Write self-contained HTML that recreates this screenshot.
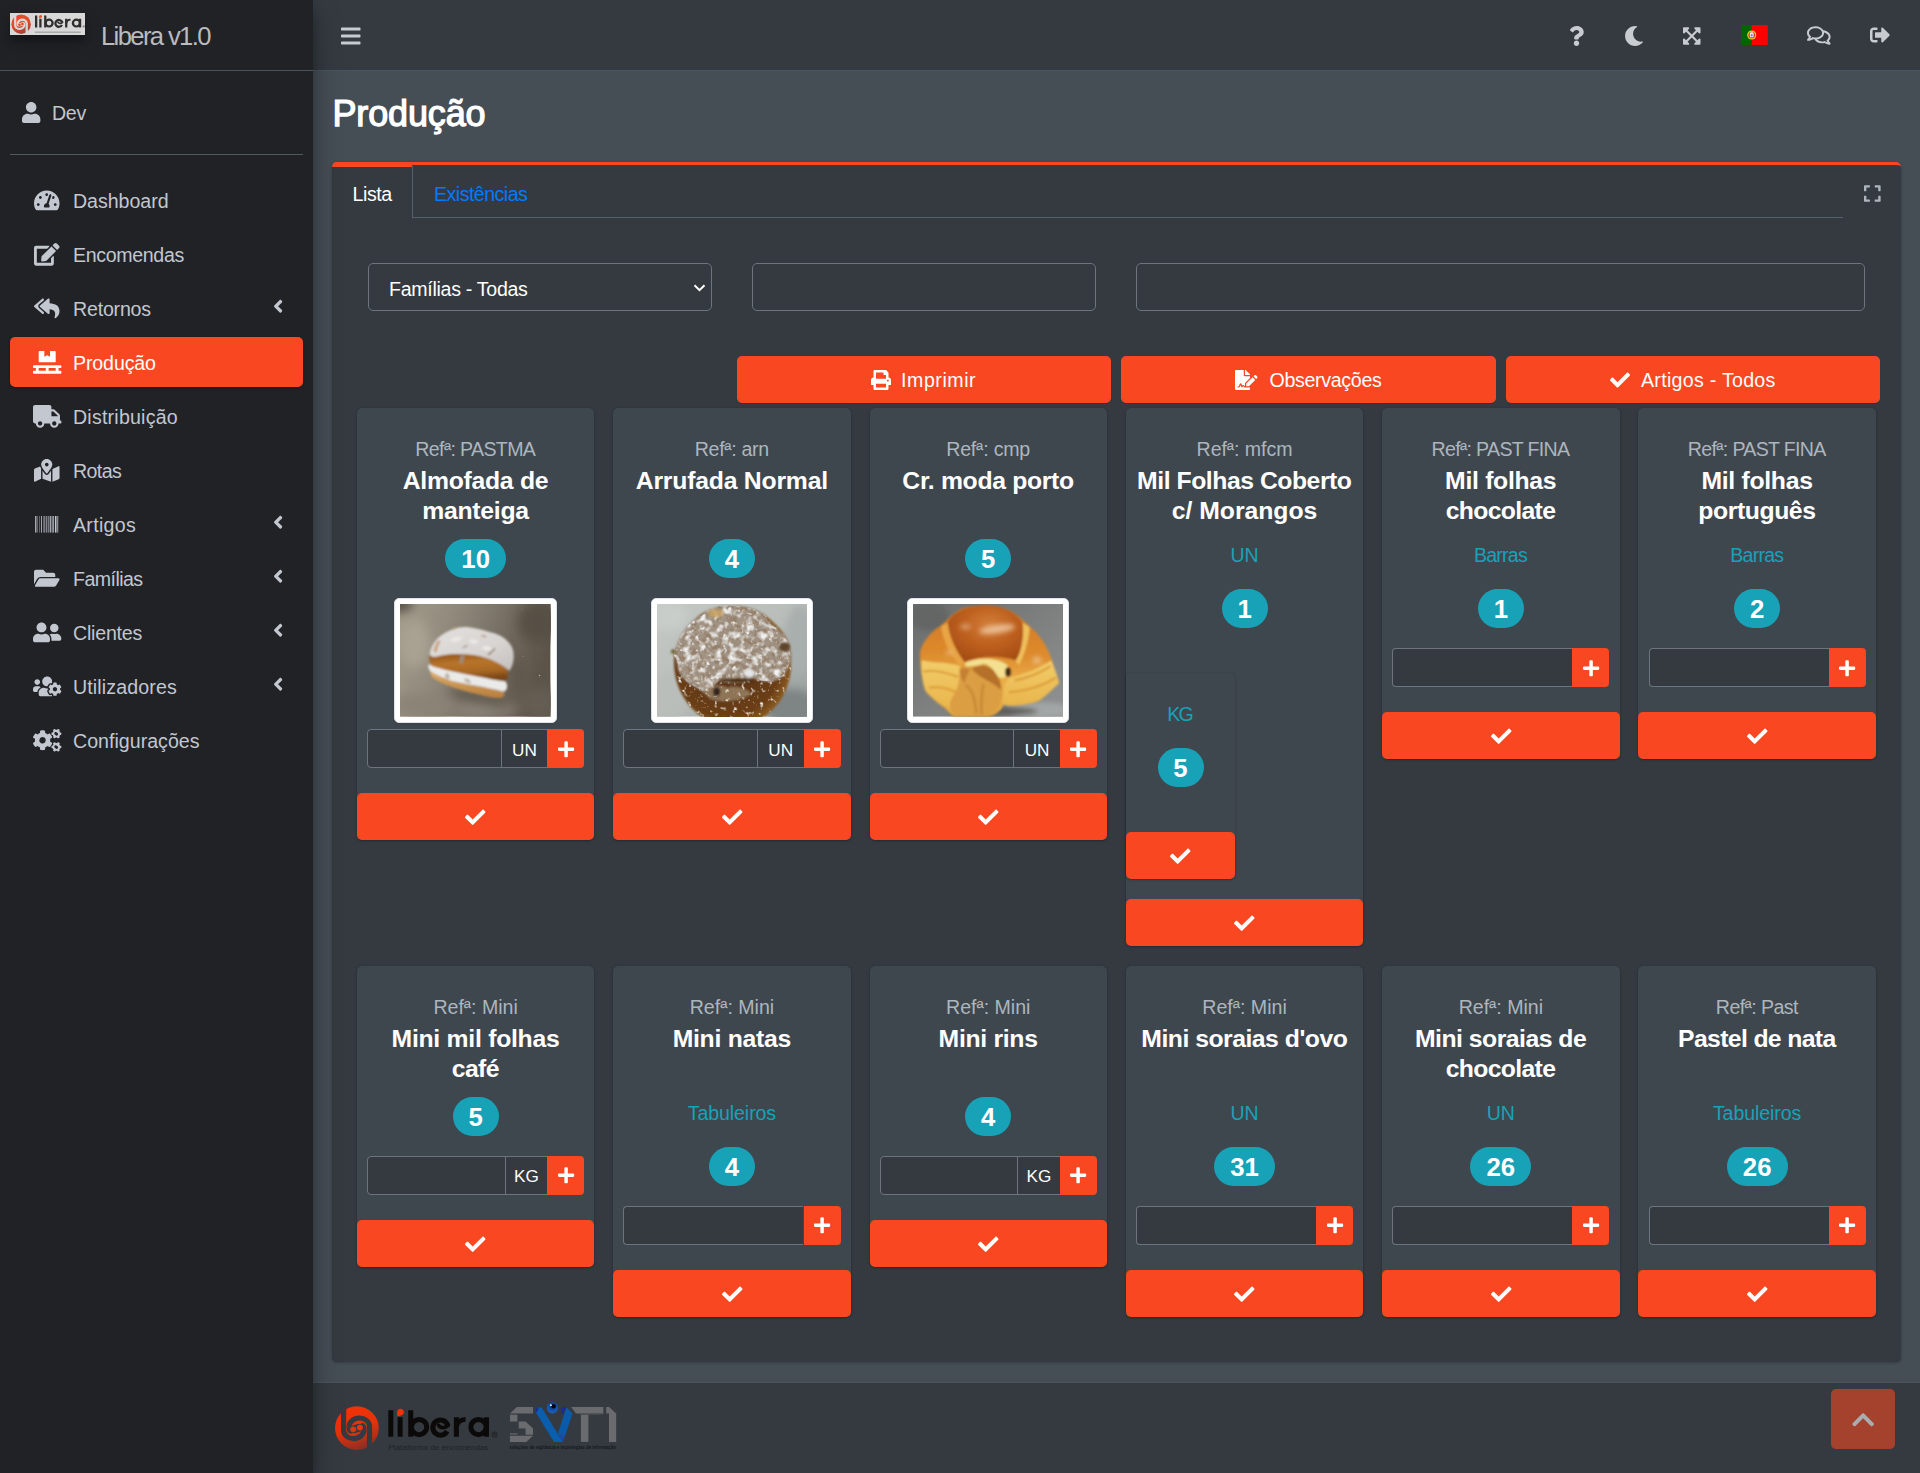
<!DOCTYPE html>
<html lang="pt">
<head>
<meta charset="utf-8">
<title>Libera v1.0 - Produção</title>
<style>
*{box-sizing:border-box}
html,body{margin:0;padding:0}
body{width:1920px;height:1473px;overflow:hidden;position:relative;background:#454d55;color:#fff;font-family:"Liberation Sans",sans-serif;font-size:19.4px}
.b{position:absolute;display:block}
.t{position:absolute;display:block;white-space:nowrap;margin:0;padding:0}
.ic{position:absolute;display:block;overflow:visible}
ul,li,h1,h5,p{margin:0;padding:0;list-style:none;font-weight:inherit;font-size:inherit}
.btn{background:#f94722;border-radius:5px;box-shadow:0 1px 1px rgba(0,0,0,.075)}
.fc{background:#343a40;border:1px solid #6c757d;border-radius:5px}
.icard{background:#3f474e;border-radius:5px;box-shadow:0 0 1px rgba(0,0,0,.125),0 1px 3px rgba(0,0,0,.2)}
.badge{background:#17a2b8;border-radius:20px;color:#fff;font-weight:700;text-align:center}

</style>
</head>
<body>
<nav class="b" style="left:312.5px;top:0;width:1607.5px;height:71px;background:#343a40;border-bottom:1px solid #4b545c"><svg class="ic" style="left:28.5px;top:23.5px;width:19.5px;height:24px;" viewBox="0 0 448 512"><path fill="#c8cbcf" d="M16 132h416c8.837 0 16-7.163 16-16V76c0-8.837-7.163-16-16-16H16C7.163 60 0 67.163 0 76v40c0 8.837 7.163 16 16 16zm0 160h416c8.837 0 16-7.163 16-16v-40c0-8.837-7.163-16-16-16H16c-8.837 0-16 7.163-16 16v40c0 8.837 7.163 16 16 16zm0 160h416c8.837 0 16-7.163 16-16v-40c0-8.837-7.163-16-16-16H16c-8.837 0-16 7.163-16 16v40c0 8.837 7.163 16 16 16z"/></svg><svg class="ic" style="left:1256.6px;top:26.0px;width:15.0px;height:20px;" viewBox="0 0 384 512"><path fill="#c8cbcf" d="M202.021 0C122.202 0 70.503 32.703 29.914 91.026c-7.363 10.58-5.093 25.086 5.178 32.874l43.138 32.709c10.373 7.865 25.132 6.026 33.253-4.148 25.049-31.381 43.63-49.449 82.757-49.449 30.764 0 68.816 19.799 68.816 49.631 0 22.552-18.617 34.134-48.993 51.164-35.423 19.86-82.299 44.576-82.299 106.405V320c0 13.255 10.745 24 24 24h72.471c13.255 0 24-10.745 24-24v-5.773c0-42.86 125.268-44.645 125.268-160.627C377.504 66.256 286.902 0 202.021 0zM192 373.459c-38.196 0-69.271 31.075-69.271 69.271 0 38.195 31.075 69.27 69.271 69.27s69.271-31.075 69.271-69.271-31.075-69.27-69.271-69.27z"/></svg><svg class="ic" style="left:1311.0px;top:25.5px;width:20.0px;height:20px;" viewBox="0 0 512 512"><path fill="#c8cbcf" d="M283.211 512c78.962 0 151.079-35.925 198.857-94.792 7.068-8.708-.639-21.43-11.562-19.35-124.203 23.654-238.262-71.576-238.262-196.954 0-72.222 38.662-138.635 101.498-174.394 9.686-5.512 7.25-20.197-3.756-22.23A258.156 258.156 0 0 0 283.211 0c-141.309 0-256 114.511-256 256 0 141.309 114.511 256 256 256z"/></svg><svg class="ic" style="left:1370.95px;top:25.8px;width:17.5px;height:20px;" viewBox="0 0 448 512"><path fill="#c8cbcf" d="M448 344v112a23.94 23.94 0 0 1-24 24H312c-21.39 0-32.09-25.9-17-41l36.2-36.2L224 295.6 116.77 402.9 153 439c15.09 15.1 4.39 41-17 41H24a23.94 23.94 0 0 1-24-24V344c0-21.4 25.89-32.1 41-17l36.19 36.2L184.46 256 77.18 148.7 41 185c-15.1 15.1-41 4.4-41-17V56a23.94 23.94 0 0 1 24-24h112c21.39 0 32.09 25.9 17 41l-36.2 36.2L224 216.4l107.23-107.3L295 73c-15.09-15.1-4.39-41 17-41h112a23.94 23.94 0 0 1 24 24v112c0 21.4-25.89 32.1-41 17l-36.19-36.2L263.54 256l107.28 107.3L407 327.1c15.1-15.2 41-4.5 41 16.9z"/></svg><svg class="ic" style="left:1428.7px;top:25px;width:26.8px;height:20px" viewBox="0 0 27 20"><rect width="27" height="20" fill="#f00"/><rect width="10.8" height="20" fill="#060"/><circle cx="10.8" cy="10" r="4.6" fill="#e8d21d"/><circle cx="10.8" cy="10" r="3.4" fill="#d9412c"/><rect x="8.9" y="7.3" width="3.8" height="5" rx="1.2" fill="#e8e8f4"/><circle cx="10.8" cy="10.2" r="1" fill="#5b6fc0"/></svg><svg class="ic" style="left:1494.49px;top:25.0px;width:23.62px;height:21px;" viewBox="0 0 576 512"><path fill="#c8cbcf" d="M532 386.200c27.500-27.100 44-61.100 44-98.200 0-80-76.500-146.100-176.200-157.900C368.300 72.500 294.300 32 208 32 93.100 32 0 103.600 0 192c0 37 16.500 71 44 98.200-15.300 30.700-37.300 54.500-37.700 54.900-6.300 6.700-8.100 16.500-4.400 25 3.600 8.500 12 14 21.200 14 53.500 0 96.700-20.200 125.200-38.800 9.200 2.100 18.700 3.700 28.400 4.900C208.100 407.600 281.800 448 368 448c20.800 0 40.800-2.400 59.800-6.800C456.300 459.700 499.400 480 553 480c9.200 0 17.500-5.500 21.200-14 3.600-8.500 1.900-18.300-4.400-25-.4-.3-22.500-24.100-37.800-54.800zm-392.800-92.300L122.100 305c-14.100 9.100-28.500 16.300-43.100 21.400 2.700-4.700 5.400-9.700 8-14.800l15.500-31.100L77.700 256C64.200 242.600 48 220.700 48 192c0-60.700 73.300-112 160-112s160 51.300 160 112-73.300 112-160 112c-16.500 0-33-1.900-49-5.600l-19.800-4.500zM498.300 352l-24.700 24.400 15.500 31.100c2.600 5.100 5.300 10.100 8 14.800-14.600-5.100-29-12.300-43.100-21.400l-17.100-11.100-19.900 4.600c-16 3.700-32.500 5.600-49 5.600-54 0-102.200-20.100-131.300-49.700C338 339.500 416 272.900 416 192c0-3.400-.4-6.700-.7-10C479.700 196.500 528 238.800 528 288c0 28.700-16.200 50.600-29.700 64z"/></svg><svg class="ic" style="left:1557.3px;top:25.4px;width:20.0px;height:20px;" viewBox="0 0 512 512"><path fill="#c8cbcf" d="M497 273L329 441c-15 15-41 4.5-41-17v-96H152c-13.3 0-24-10.7-24-24v-96c0-13.3 10.7-24 24-24h136V88c0-21.4 25.9-32 41-17l168 168c9.3 9.4 9.3 24.6 0 34zM192 436v-40c0-6.6-5.4-12-12-12H96c-17.7 0-32-14.3-32-32V160c0-17.7 14.3-32 32-32h84c6.6 0 12-5.4 12-12V76c0-6.6-5.4-12-12-12H96c-53 0-96 43-96 96v192c0 53 43 96 96 96h84c6.6 0 12-5.4 12-12z"/></svg></nav><h1><span class="t " style="top:89.53px;font-size:36.00px;line-height:47px;color:#fff;letter-spacing:-0.129px;left:332.40px;-webkit-text-stroke:1.25px #fff;">Produção</span></h1><section class="b" style="left:332px;top:162px;width:1569px;height:1199.5px;background:#343a40;border-radius:5px;border-top:3.75px solid #f94722;box-shadow:0 0 1px rgba(0,0,0,.125),0 1px 3px rgba(0,0,0,.2)"></section><div class="b" style="left:412px;top:217px;width:1431px;height:1px;background:#56606a"></div><div class="b" style="left:332px;top:162px;width:81px;height:56px;border-top:5.5px solid #f94722;border-right:1px solid #56606a;border-radius:5px 5px 0 0"></div><span class="t " style="top:181.71px;font-size:19.60px;line-height:25px;color:#fff;letter-spacing:-0.421px;left:352.50px;">Lista</span><span class="t " style="top:181.71px;font-size:19.60px;line-height:25px;color:#007bff;letter-spacing:-0.529px;left:434.00px;">Existências</span><svg class="ic" style="left:1864.29px;top:183.5px;width:16.62px;height:19px;" viewBox="0 0 448 512"><path fill="#adb5bd" d="M0 180V56c0-13.3 10.7-24 24-24h124c6.6 0 12 5.4 12 12v40c0 6.6-5.4 12-12 12H64v84c0 6.6-5.4 12-12 12H12c-6.6 0-12-5.4-12-12zM288 44v40c0 6.6 5.4 12 12 12h84v84c0 6.6 5.4 12 12 12h40c6.6 0 12-5.4 12-12V56c0-13.3-10.7-24-24-24H300c-6.6 0-12 5.4-12 12zm148 276h-40c-6.600 0-12 5.4-12 12v84h-84c-6.6 0-12 5.4-12 12v40c0 6.6 5.4 12 12 12h124c13.3 0 24-10.7 24-24V332c0-6.6-5.4-12-12-12zM160 468v-40c0-6.6-5.4-12-12-12H64v-84c0-6.6-5.4-12-12-12H12c-6.6 0-12 5.4-12 12v124c0 13.3 10.7 24 24 24h124c6.6 0 12-5.4 12-12z"/></svg><div class="b fc" style="left:367.6px;top:263px;width:344.4px;height:47.5px"></div><span class="t " style="top:276.71px;font-size:19.60px;line-height:25px;color:#fff;letter-spacing:-0.299px;left:389.00px;">Famílias - Todas</span><svg class="ic" style="left:693.4px;top:282.8px;width:13px;height:10px" viewBox="0 0 13 10"><path d="M1.5 2.2l5 5 5-5" fill="none" stroke="#fff" stroke-width="2"/></svg><div class="b fc" style="left:752px;top:263px;width:344.4px;height:47.5px"></div><div class="b fc" style="left:1136.3px;top:263px;width:728.8px;height:47.5px"></div><div class="b btn" style="left:737px;top:356px;width:374.4px;height:47px"></div><svg class="ic" style="left:870.5px;top:369.5px;width:20.0px;height:20px;" viewBox="0 0 512 512"><path fill="#fff" d="M448 192V77.25c0-8.49-3.37-16.62-9.37-22.63L393.37 9.37c-6-6-14.14-9.37-22.63-9.37H96C78.33 0 64 14.33 64 32v160c-35.35 0-64 28.65-64 64v112c0 8.84 7.16 16 16 16h48v96c0 17.67 14.33 32 32 32h320c17.67 0 32-14.33 32-32v-96h48c8.84 0 16-7.16 16-16V256c0-35.35-28.65-64-64-64zm-64 256H128v-96h256v96zm0-224H128V64h192v48c0 8.84 7.16 16 16 16h48v96zm48 72c-13.25 0-24-10.75-24-24 0-13.26 10.75-24 24-24s24 10.74 24 24c0 13.25-10.75 24-24 24z"/></svg><span class="t " style="top:368.31px;font-size:19.60px;line-height:25px;color:#fff;letter-spacing:0.555px;left:901.00px;">Imprimir</span><div class="b btn" style="left:1121.4px;top:356px;width:374.4px;height:47px"></div><svg class="ic" style="left:1235.25px;top:369.5px;width:22.5px;height:20px;" viewBox="0 0 576 512"><path fill="#fff" d="M218.17 424.14c-2.95-5.92-8.09-6.520-10.170-6.520s-7.220.59-10.020 6.190l-7.670 15.340c-6.370 12.780-25.030 11.370-29.480-2.090L144 386.590l-10.610 31.880c-5.890 17.660-22.380 29.530-41 29.530H80c-8.840 0-16-7.160-16-16s7.160-16 16-16h12.390c4.830 0 9.110-3.080 10.640-7.660l18.190-54.640c3.300-9.810 12.440-16.410 22.780-16.410s19.480 6.590 22.770 16.410l13.880 41.640c19.750-16.190 54.060-9.700 66 14.160 1.890 3.780 5.490 5.950 9.360 6.260v-82.120l128-127.090V160H248c-13.200 0-24-10.800-24-24V0H24C10.700 0 0 10.700 0 24v464c0 13.300 10.700 24 24 24h336c13.300 0 24-10.700 24-24v-40l-128-.11c-16.120-.31-30.580-9.280-37.830-23.750zM384 121.900c0-6.300-2.500-12.400-7-16.900L279.100 7c-4.500-4.500-10.600-7-17-7H256v128h128v-6.100zm-96 225.060V416h68.990l161.680-162.780-67.880-67.880L288 346.960zm280.540-179.630l-31.870-31.870c-9.940-9.940-26.070-9.940-36.010 0l-27.250 27.250 67.880 67.880 27.250-27.250c9.950-9.940 9.950-26.070 0-36.010z"/></svg><span class="t " style="top:368.31px;font-size:19.60px;line-height:25px;color:#fff;letter-spacing:-0.315px;left:1269.50px;">Observações</span><div class="b btn" style="left:1505.8px;top:356px;width:374.4px;height:47px"></div><svg class="ic" style="left:1609.5px;top:369.5px;width:20.0px;height:20px;" viewBox="0 0 512 512"><path fill="#fff" d="M173.898 439.404l-166.4-166.4c-9.997-9.997-9.997-26.206 0-36.204l36.203-36.204c9.997-9.998 26.207-9.998 36.204 0L192 312.69 432.095 72.596c9.997-9.997 26.207-9.997 36.204 0l36.203 36.204c9.997 9.997 9.997 26.206 0 36.204l-294.4 294.401c-9.998 9.997-26.207 9.997-36.204-.001z"/></svg><span class="t " style="top:368.31px;font-size:19.60px;line-height:25px;color:#fff;letter-spacing:0.284px;left:1641.00px;">Artigos - Todos</span><article><div class="b icard" style="left:356.9px;top:408.2px;width:237.5px;height:432.05px"></div><span class="t " style="top:436.91px;font-size:19.60px;line-height:25px;color:#adb5bd;letter-spacing:-0.655px;left:356.57px;width:237.5px;text-align:center;">Refª: PASTMA</span><span class="t " style="top:464.62px;font-size:24.75px;line-height:32px;color:#fff;font-weight:700;letter-spacing:-0.254px;left:346.77px;width:257.5px;text-align:center;">Almofada de</span><span class="t " style="top:494.62px;font-size:24.75px;line-height:32px;color:#fff;font-weight:700;letter-spacing:-0.239px;left:346.78px;width:257.5px;text-align:center;">manteiga</span><span class="b badge" style="left:445.15px;top:539.2px;width:61px;height:39px;font-size:25.72px;line-height:41.5px">10</span><div class="b" style="left:394.45px;top:598.2px;width:162.4px;height:125px;background:#fff;border:1px solid #dee2e6;border-radius:5px;box-shadow:0 1px 2px rgba(0,0,0,.075)"></div><svg class="ic" style="left:400.45px;top:604.40px;width:150.4px;height:112.6px;overflow:hidden" viewBox="25 25 1870 1395" preserveAspectRatio="none"><defs>
<linearGradient id="p1bg" x1="0" y1=".1" x2="1" y2=".35"><stop offset="0" stop-color="#a19a8a"/><stop offset=".3" stop-color="#938c7e"/><stop offset=".55" stop-color="#7f786c"/><stop offset=".8" stop-color="#6b6358"/><stop offset="1" stop-color="#5c5449"/></linearGradient>
<linearGradient id="p1br" x1="0" y1="0" x2=".25" y2="1"><stop offset="0" stop-color="#8e521a"/><stop offset=".4" stop-color="#b8742a"/><stop offset=".75" stop-color="#a86824"/><stop offset="1" stop-color="#7c4618"/></linearGradient>
<linearGradient id="p1bt" x1="0" y1="0" x2="0" y2="1"><stop offset="0" stop-color="#e0b06a"/><stop offset="1" stop-color="#b77c3c"/></linearGradient>
<linearGradient id="p1sg" x1="0" y1="0" x2="1" y2="1"><stop offset="0" stop-color="#e2dfdd"/><stop offset=".6" stop-color="#d8d4d2"/><stop offset="1" stop-color="#c4bfbc"/></linearGradient>
<filter id="p1f" x="-10%" y="-10%" width="120%" height="120%"><feGaussianBlur stdDeviation="10"/></filter>
<filter id="p1g" x="-30%" y="-30%" width="160%" height="160%"><feGaussianBlur stdDeviation="70"/></filter>
</defs>
<rect x="25" y="25" width="1870" height="1395" fill="url(#p1bg)"/>
<g filter="url(#p1g)">
<ellipse cx="30" cy="20" rx="150" ry="110" fill="#504a3f"/>
<ellipse cx="200" cy="520" rx="200" ry="300" fill="#a9a293"/>
<ellipse cx="1750" cy="250" rx="260" ry="260" fill="#574f44"/>
<ellipse cx="300" cy="1280" rx="380" ry="140" fill="#8a8376"/>
<ellipse cx="1100" cy="1340" rx="380" ry="90" fill="#8d867a"/>
<ellipse cx="1750" cy="1250" rx="240" ry="200" fill="#655d52"/>
<ellipse cx="980" cy="1200" rx="400" ry="40" fill="#453e34" transform="rotate(15 980 1200)"/>
<ellipse cx="1500" cy="900" rx="80" ry="200" fill="#5f574c"/>
</g>
<g filter="url(#p1f)">
<path d="M405 850C480 900 600 960 700 985 900 1030 1100 1055 1300 1108 1340 1125 1330 1160 1290 1185 1250 1195 1200 1190 1150 1180 1000 1150 800 1100 650 1045 560 1010 470 975 425 930 405 900 400 870 405 850Z" fill="url(#p1bt)"/>
<path d="M378 775C420 790 560 830 700 862 900 902 1100 942 1340 985 1362 1020 1362 1060 1345 1090 1320 1120 1290 1110 1250 1095 1100 1055 900 1030 700 985 600 960 480 905 400 855 380 830 372 800 378 775Z" fill="#eaeae8"/>
<path d="M600 880c30 0 50 30 40 70-30 10-50-10-60-30zM820 950c40-10 80 10 90 50-40 10-80 0-90-50z" fill="#bdb6aa"/>
<path d="M395 650C420 690 470 680 520 665 600 645 700 640 800 645 900 650 1000 660 1100 695 1200 730 1300 780 1360 830 1375 870 1370 930 1340 985 1250 975 1100 945 900 905 700 865 560 835 430 795 395 770 380 710 395 650Z" fill="url(#p1br)"/>
<path d="M395 650C400 560 470 450 560 400 640 340 760 300 860 310 960 320 1100 360 1200 388 1300 420 1400 500 1425 580 1450 660 1440 760 1400 830 1390 850 1375 850 1360 830 1300 780 1200 730 1100 695 1000 660 900 650 800 645 700 640 600 645 520 665 470 680 420 690 395 650Z" fill="url(#p1sg)"/>
<path d="M640 470c60-40 130-50 160-20-40 40-110 60-160 20zM880 480c40-30 100-20 120 20-40 30-90 20-120-20zM1040 560c50-30 110-10 130 30-50 20-100 10-130-30z" fill="#ebe8e6"/>
<path d="M780 650l50 10-20 90-50 20zM1110 650l90-80 14 16-84 80zM800 560l60-30 6 14-56 30z" fill="#9d8a7a"/>
<path d="M660 330l50-20 40 10-70 30zM1040 405l60 16-8 18-52-12z" fill="#b89a7c"/>
<path d="M440 610c10-50 30-100 60-140l30 16c-20 40-40 90-50 140z" fill="#caa684"/>
</g>
<circle cx="1760" cy="912" r="9" fill="#b9b6ad"/><circle cx="1555" cy="672" r="6" fill="#a9a69d"/><circle cx="1548" cy="92" r="6" fill="#9a978e"/></svg><div class="b" style="left:367.09999999999997px;top:729.2px;width:134.59999999999997px;height:38.75px;background:#343a40;border:1px solid #6c757d;border-radius:4px 0 0 4px"></div><div class="b" style="left:500.69999999999993px;top:729.2px;width:46.5px;height:38.75px;background:#343a40;border:1px solid #6c757d;border-right:0"></div><span class="t " style="top:738.56px;font-size:17.15px;line-height:22px;color:#fff;left:494.45px;width:60px;text-align:center;">UN</span><div class="b" style="left:547.1999999999999px;top:729.2px;width:37px;height:38.75px;background:#f94722;border-radius:0 4px 4px 0"></div><svg class="ic" style="left:557.71px;top:739.55px;width:16.19px;height:18.5px;" viewBox="0 0 448 512"><path fill="#fff" d="M416 208H272V64c0-17.67-14.33-32-32-32h-32c-17.67 0-32 14.33-32 32v144H32c-17.67 0-32 14.33-32 32v32c0 17.67 14.33 32 32 32h144v144c0 17.67 14.33 32 32 32h32c17.67 0 32-14.33 32-32V304h144c17.67 0 32-14.33 32-32v-32c0-17.67-14.33-32-32-32z"/></svg><div class="b btn" style="left:356.9px;top:792.95px;width:237.5px;height:47.3px"></div><svg class="ic" style="left:465.4px;top:807.0px;width:20.5px;height:20.5px;" viewBox="0 0 512 512"><path fill="#fff" d="M173.898 439.404l-166.4-166.4c-9.997-9.997-9.997-26.206 0-36.204l36.203-36.204c9.997-9.998 26.207-9.998 36.204 0L192 312.69 432.095 72.596c9.997-9.997 26.207-9.997 36.204 0l36.203 36.204c9.997 9.997 9.997 26.206 0 36.204l-294.4 294.401c-9.998 9.997-26.207 9.997-36.204-.001z"/></svg></article><article><div class="b icard" style="left:613.2px;top:408.2px;width:237.5px;height:432.05px"></div><span class="t " style="top:436.91px;font-size:19.60px;line-height:25px;color:#adb5bd;letter-spacing:-0.341px;left:613.03px;width:237.5px;text-align:center;">Refª: arn</span><span class="t " style="top:464.62px;font-size:24.75px;line-height:32px;color:#fff;font-weight:700;letter-spacing:-0.217px;left:603.09px;width:257.5px;text-align:center;">Arrufada Normal</span><span class="b badge" style="left:708.95px;top:539.2px;width:46px;height:39px;font-size:25.72px;line-height:41.5px">4</span><div class="b" style="left:650.75px;top:598.2px;width:162.4px;height:125px;background:#fff;border:1px solid #dee2e6;border-radius:5px;box-shadow:0 1px 2px rgba(0,0,0,.075)"></div><svg class="ic" style="left:656.75px;top:604.40px;width:150.4px;height:112.6px;overflow:hidden" viewBox="122 113 1660 1247" preserveAspectRatio="none"><defs>
<linearGradient id="p2bg" x1="0" y1="0" x2="1" y2="1"><stop offset="0" stop-color="#c4c9c5"/><stop offset=".5" stop-color="#b8bdba"/><stop offset="1" stop-color="#949b9a"/></linearGradient>
<radialGradient id="p2br" cx=".45" cy=".5" r=".6"><stop offset="0" stop-color="#552f12"/><stop offset=".75" stop-color="#6a3e17"/><stop offset="1" stop-color="#9a6826"/></radialGradient>
<filter id="p2f" x="-10%" y="-10%" width="120%" height="120%"><feGaussianBlur stdDeviation="10"/></filter>
<filter id="p2g" x="-30%" y="-30%" width="160%" height="160%"><feGaussianBlur stdDeviation="45"/></filter>
<filter id="p2n" x="0" y="0" width="100%" height="100%"><feTurbulence type="fractalNoise" baseFrequency=".012" numOctaves="2" seed="7" result="n"/><feColorMatrix in="n" type="matrix" values="0 0 0 0 .88  0 0 0 0 .88  0 0 0 0 .88  3.2 0 0 0 -1.5"/><feComposite in2="SourceGraphic" operator="in"/><feGaussianBlur stdDeviation="5"/></filter>
<filter id="p2s" x="0" y="0" width="100%" height="100%"><feTurbulence type="fractalNoise" baseFrequency=".02" numOctaves="2" seed="41" result="n"/><feColorMatrix in="n" type="matrix" values="0 0 0 0 .85  0 0 0 0 .84  0 0 0 0 .82  0 0 4 0 -2.35"/><feComposite in2="SourceGraphic" operator="in"/><feGaussianBlur stdDeviation="5"/></filter><filter id="p2m" x="0" y="0" width="100%" height="100%"><feTurbulence type="fractalNoise" baseFrequency=".016" numOctaves="2" seed="23" result="n"/><feColorMatrix in="n" type="matrix" values="0 0 0 0 .30  0 0 0 0 .21  0 0 0 0 .14  0 3.6 0 0 -1.6"/><feComposite in2="SourceGraphic" operator="in"/><feGaussianBlur stdDeviation="5"/></filter>
</defs>
<rect x="122" y="113" width="1660" height="1247" fill="url(#p2bg)"/>
<g filter="url(#p2g)">
<ellipse cx="1700" cy="500" rx="160" ry="380" fill="#a9afad"/>
<ellipse cx="250" cy="1150" rx="200" ry="250" fill="#b9beba"/>
<ellipse cx="1600" cy="1250" rx="300" ry="200" fill="#7e8584"/>
<ellipse cx="250" cy="250" rx="200" ry="150" fill="#c8cdc9"/>
</g>
<g filter="url(#p2f)">
<path d="M310 760C300 620 380 420 520 300 660 160 840 120 1000 140 1160 130 1320 220 1420 330 1560 450 1620 600 1600 760 1610 900 1560 1080 1470 1200 1400 1290 1300 1380 1200 1420H760C600 1380 470 1260 390 1100 330 980 310 860 310 760Z" fill="url(#p2br)"/>
<path d="M330 700C310 560 420 330 620 240 760 120 900 110 1010 150 1150 130 1300 220 1360 320 1500 420 1600 540 1590 640 1600 760 1560 880 1480 930 1380 1000 1250 960 1180 930 1080 1000 900 990 800 960 720 1060 640 1140 610 1060 520 1020 400 960 360 840z" fill="#a09384"/>
<path d="M640 1060C700 1010 820 1000 900 1040 980 1010 1100 1040 1160 1100 1100 1180 900 1200 760 1180 700 1160 640 1120 640 1060Z" fill="#9a8468" opacity=".8"/>
</g>
<path filter="url(#p2m)" d="M330 700C310 560 420 330 620 240 760 120 900 110 1010 150 1150 130 1300 220 1360 320 1500 420 1600 540 1590 640 1600 760 1560 880 1480 930 1380 1000 1250 960 1180 930 1080 1000 900 990 800 960 720 1060 640 1140 610 1060 520 1020 400 960 360 840z" fill="#000"/>
<path filter="url(#p2n)" d="M330 700C310 560 420 330 620 240 760 120 900 110 1010 150 1150 130 1300 220 1360 320 1500 420 1600 540 1590 640 1600 760 1560 880 1480 930 1380 1000 1250 960 1180 930 1080 1000 900 990 800 960 720 1060 640 1140 610 1060 520 1020 400 960 360 840z" fill="#000"/><path filter="url(#p2s)" d="M310 760C300 620 380 420 520 300 660 160 840 120 1000 140 1160 130 1320 220 1420 330 1560 450 1620 600 1600 760 1610 900 1560 1080 1470 1200 1400 1290 1300 1380 1200 1420H760C600 1380 470 1260 390 1100 330 980 310 860 310 760Z" fill="#000"/>
<g filter="url(#p2f)">
<ellipse cx="770" cy="215" rx="90" ry="45" fill="#c9a35e" opacity=".8"/>
<ellipse cx="1000" cy="960" rx="190" ry="26" fill="#4e3216"/>
<ellipse cx="780" cy="1085" rx="36" ry="46" fill="#33241e"/>
<ellipse cx="1530" cy="590" rx="60" ry="50" fill="#5e452e"/>
<ellipse cx="300" cy="640" rx="24" ry="24" fill="#6a5a2a"/>
<ellipse cx="1140" cy="880" rx="60" ry="44" fill="#e4e6ea"/>
</g></svg><div class="b" style="left:623.4000000000001px;top:729.2px;width:134.5999999999999px;height:38.75px;background:#343a40;border:1px solid #6c757d;border-radius:4px 0 0 4px"></div><div class="b" style="left:757.0px;top:729.2px;width:46.5px;height:38.75px;background:#343a40;border:1px solid #6c757d;border-right:0"></div><span class="t " style="top:738.56px;font-size:17.15px;line-height:22px;color:#fff;left:750.75px;width:60px;text-align:center;">UN</span><div class="b" style="left:803.5px;top:729.2px;width:37px;height:38.75px;background:#f94722;border-radius:0 4px 4px 0"></div><svg class="ic" style="left:814.01px;top:739.55px;width:16.19px;height:18.5px;" viewBox="0 0 448 512"><path fill="#fff" d="M416 208H272V64c0-17.67-14.33-32-32-32h-32c-17.67 0-32 14.33-32 32v144H32c-17.67 0-32 14.33-32 32v32c0 17.67 14.33 32 32 32h144v144c0 17.67 14.33 32 32 32h32c17.67 0 32-14.33 32-32V304h144c17.67 0 32-14.33 32-32v-32c0-17.67-14.33-32-32-32z"/></svg><div class="b btn" style="left:613.2px;top:792.95px;width:237.5px;height:47.3px"></div><svg class="ic" style="left:721.7px;top:807.0px;width:20.5px;height:20.5px;" viewBox="0 0 512 512"><path fill="#fff" d="M173.898 439.404l-166.4-166.4c-9.997-9.997-9.997-26.206 0-36.204l36.203-36.204c9.997-9.998 26.207-9.998 36.204 0L192 312.69 432.095 72.596c9.997-9.997 26.207-9.997 36.204 0l36.203 36.204c9.997 9.997 9.997 26.206 0 36.204l-294.4 294.401c-9.998 9.997-26.207 9.997-36.204-.001z"/></svg></article><article><div class="b icard" style="left:869.5px;top:408.2px;width:237.5px;height:432.05px"></div><span class="t " style="top:436.91px;font-size:19.60px;line-height:25px;color:#adb5bd;letter-spacing:-0.196px;left:869.40px;width:237.5px;text-align:center;">Refª: cmp</span><span class="t " style="top:464.62px;font-size:24.75px;line-height:32px;color:#fff;font-weight:700;letter-spacing:-0.327px;left:859.34px;width:257.5px;text-align:center;">Cr. moda porto</span><span class="b badge" style="left:965.25px;top:539.2px;width:46px;height:39px;font-size:25.72px;line-height:41.5px">5</span><div class="b" style="left:907.05px;top:598.2px;width:162.4px;height:125px;background:#fff;border:1px solid #dee2e6;border-radius:5px;box-shadow:0 1px 2px rgba(0,0,0,.075)"></div><svg class="ic" style="left:913.05px;top:604.40px;width:150.4px;height:112.6px;overflow:hidden" viewBox="122 113 1660 1247" preserveAspectRatio="none"><defs>
<linearGradient id="p3bg" x1="0" y1="0" x2="1" y2="1"><stop offset="0" stop-color="#6a6c6b"/><stop offset=".5" stop-color="#7e807f"/><stop offset="1" stop-color="#909393"/></linearGradient>
<radialGradient id="p3d" cx=".55" cy=".35" r=".65"><stop offset="0" stop-color="#d27f3a"/><stop offset=".55" stop-color="#bd5f1e"/><stop offset="1" stop-color="#a64e16"/></radialGradient>
<linearGradient id="p3s" x1="0" y1="0" x2="0" y2="1"><stop offset="0" stop-color="#cf7424"/><stop offset=".45" stop-color="#de8c2e"/><stop offset=".7" stop-color="#eab04a"/><stop offset="1" stop-color="#e3a640"/></linearGradient>
<linearGradient id="p3y" x1="0" y1="0" x2="0" y2="1"><stop offset="0" stop-color="#f2cd6a"/><stop offset="1" stop-color="#e9b54c"/></linearGradient>
<filter id="p3f" x="-10%" y="-10%" width="120%" height="120%"><feGaussianBlur stdDeviation="11"/></filter>
<filter id="p3g" x="-30%" y="-30%" width="160%" height="160%"><feGaussianBlur stdDeviation="28"/></filter>
</defs>
<rect x="122" y="113" width="1660" height="1247" fill="url(#p3bg)"/>
<g filter="url(#p3g)"><ellipse cx="1500" cy="1290" rx="380" ry="90" fill="#a3a6a6"/><ellipse cx="300" cy="250" rx="220" ry="160" fill="#646665"/><ellipse cx="1000" cy="1300" rx="500" ry="50" fill="#5c5c5a"/></g>
<g filter="url(#p3f)">
<path d="M200 650C220 540 320 420 420 360 500 290 580 200 660 165 780 120 1000 115 1180 180 1260 220 1340 290 1400 350 1500 430 1600 560 1650 720 1680 830 1740 950 1730 995 1680 1040 1560 1160 1500 1190 1400 1230 1200 1250 1120 1230 1100 1300 1020 1350 960 1362H580C520 1330 500 1290 480 1270 400 1220 300 1130 260 1080 220 980 200 800 200 650Z" fill="url(#p3s)"/>
<path d="M215 740C350 770 520 760 640 800L650 1000 560 1280C440 1240 300 1130 260 1060 225 960 210 840 215 740Z" fill="url(#p3y)"/>
<path d="M1180 930C1340 900 1520 820 1650 740 1690 850 1730 950 1728 992 1660 1050 1560 1160 1500 1188 1380 1230 1200 1248 1120 1228 1100 1120 1130 1010 1180 930Z" fill="url(#p3y)"/>
<path d="M690 770C820 700 1070 700 1170 800L1140 930 770 910z" fill="#f3e090"/>
<ellipse cx="1172" cy="866" rx="34" ry="52" fill="#4a2a18"/>
<path d="M500 330C540 230 680 140 900 128 1120 120 1290 230 1330 330 1350 480 1330 640 1260 740 1120 690 860 680 690 760 600 640 520 480 500 330Z" fill="url(#p3d)"/>
<path d="M430 360L505 320C520 480 600 640 690 760L650 800C540 700 450 520 430 360Z" fill="#e8a444"/>
<path d="M1335 320L1410 370C1400 520 1350 680 1290 790L1255 745C1320 640 1350 480 1335 320Z" fill="#efc05c"/>
<path d="M250 700c60-40 160-30 260 20M240 860c100-20 220 0 380 60M300 1040c100-20 200 0 320 60M1240 960c140-20 300-90 400-160M1180 1090c160-10 360-60 520-160" stroke="#d9962f" stroke-width="26" fill="none" opacity=".8"/>
<path d="M630 830C700 790 820 810 900 772 990 790 1040 870 1062 960 1120 1020 1122 1120 1085 1200 1062 1300 1000 1342 940 1356H600C530 1300 505 1225 560 1140 620 1060 645 940 630 830Z" fill="#dc9e42"/>
<path d="M770 832C850 782 960 782 1020 862 1080 930 1102 1000 1092 1062 985 962 865 942 770 832Z" fill="#b5702a"/>
<path d="M640 842c40-30 90-20 110 0-30 60-50 100-60 150-40-40-50-100-50-150z" fill="#c68034"/>
<path d="M700 1010c60 40 110 120 120 320M900 1000c-20 100-30 220-20 340" stroke="#c88a38" stroke-width="30" fill="none"/>
</g>
<g filter="url(#p3g)">
<ellipse cx="1050" cy="390" rx="200" ry="46" fill="#f3cfaa" opacity=".8" transform="rotate(-8 1050 390)"/>
<ellipse cx="700" cy="365" rx="60" ry="30" fill="#eec09a" opacity=".65"/>
<ellipse cx="1490" cy="735" rx="48" ry="40" fill="#f3cfa8" opacity=".65"/>
<ellipse cx="520" cy="655" rx="30" ry="22" fill="#f6dcc0" opacity=".75"/>
</g></svg><div class="b" style="left:879.7px;top:729.2px;width:134.5999999999999px;height:38.75px;background:#343a40;border:1px solid #6c757d;border-radius:4px 0 0 4px"></div><div class="b" style="left:1013.3px;top:729.2px;width:46.5px;height:38.75px;background:#343a40;border:1px solid #6c757d;border-right:0"></div><span class="t " style="top:738.56px;font-size:17.15px;line-height:22px;color:#fff;left:1007.05px;width:60px;text-align:center;">UN</span><div class="b" style="left:1059.8px;top:729.2px;width:37px;height:38.75px;background:#f94722;border-radius:0 4px 4px 0"></div><svg class="ic" style="left:1070.31px;top:739.55px;width:16.19px;height:18.5px;" viewBox="0 0 448 512"><path fill="#fff" d="M416 208H272V64c0-17.67-14.33-32-32-32h-32c-17.67 0-32 14.33-32 32v144H32c-17.67 0-32 14.33-32 32v32c0 17.67 14.33 32 32 32h144v144c0 17.67 14.33 32 32 32h32c17.67 0 32-14.33 32-32V304h144c17.67 0 32-14.33 32-32v-32c0-17.67-14.33-32-32-32z"/></svg><div class="b btn" style="left:869.5px;top:792.95px;width:237.5px;height:47.3px"></div><svg class="ic" style="left:978.0px;top:807.0px;width:20.5px;height:20.5px;" viewBox="0 0 512 512"><path fill="#fff" d="M173.898 439.404l-166.4-166.4c-9.997-9.997-9.997-26.206 0-36.204l36.203-36.204c9.997-9.998 26.207-9.998 36.204 0L192 312.69 432.095 72.596c9.997-9.997 26.207-9.997 36.204 0l36.203 36.204c9.997 9.997 9.997 26.206 0 36.204l-294.4 294.401c-9.998 9.997-26.207 9.997-36.204-.001z"/></svg></article><article><div class="b icard" style="left:1125.8000000000002px;top:408.2px;width:237.5px;height:537.90px"></div><span class="t " style="top:436.91px;font-size:19.60px;line-height:25px;color:#adb5bd;letter-spacing:-0.063px;left:1125.77px;width:237.5px;text-align:center;">Refª: mfcm</span><span class="t " style="top:464.62px;font-size:24.75px;line-height:32px;color:#fff;font-weight:700;letter-spacing:-0.462px;left:1115.57px;width:257.5px;text-align:center;">Mil Folhas Coberto</span><span class="t " style="top:494.62px;font-size:24.75px;line-height:32px;color:#fff;font-weight:700;letter-spacing:-0.031px;left:1115.78px;width:257.5px;text-align:center;">c/ Morangos</span><span class="t " style="top:542.71px;font-size:19.60px;line-height:25px;color:#17a2b8;letter-spacing:-0.212px;left:1125.69px;width:237.5px;text-align:center;">UN</span><span class="b badge" style="left:1221.55px;top:589.2px;width:46px;height:39px;font-size:25.72px;line-height:41.5px">1</span><div class="b icard" style="left:1125.8000000000002px;top:673.2px;width:109.4px;height:205.6px"></div><span class="t " style="top:701.91px;font-size:19.60px;line-height:25px;color:#17a2b8;letter-spacing:-1.612px;left:1124.99px;width:109.4px;text-align:center;">KG</span><span class="b badge" style="left:1157.50px;top:748.2px;width:46px;height:39px;font-size:25.72px;line-height:41.5px">5</span><div class="b btn" style="left:1125.8000000000002px;top:832.2px;width:109.4px;height:47.3px"></div><svg class="ic" style="left:1170.25px;top:846.25px;width:20.5px;height:20.5px;" viewBox="0 0 512 512"><path fill="#fff" d="M173.898 439.404l-166.4-166.4c-9.997-9.997-9.997-26.206 0-36.204l36.203-36.204c9.997-9.998 26.207-9.998 36.204 0L192 312.69 432.095 72.596c9.997-9.997 26.207-9.997 36.204 0l36.203 36.204c9.997 9.997 9.997 26.206 0 36.204l-294.4 294.401c-9.998 9.997-26.207 9.997-36.204-.001z"/></svg><div class="b btn" style="left:1125.8000000000002px;top:898.8000000000001px;width:237.5px;height:47.3px"></div><svg class="ic" style="left:1234.3px;top:912.85px;width:20.5px;height:20.5px;" viewBox="0 0 512 512"><path fill="#fff" d="M173.898 439.404l-166.4-166.4c-9.997-9.997-9.997-26.206 0-36.204l36.203-36.204c9.997-9.998 26.207-9.998 36.204 0L192 312.69 432.095 72.596c9.997-9.997 26.207-9.997 36.204 0l36.203 36.204c9.997 9.997 9.997 26.206 0 36.204l-294.4 294.401c-9.998 9.997-26.207 9.997-36.204-.001z"/></svg></article><article><div class="b icard" style="left:1382.1px;top:408.2px;width:237.5px;height:351.05px"></div><span class="t " style="top:436.91px;font-size:19.60px;line-height:25px;color:#adb5bd;letter-spacing:-0.679px;left:1381.76px;width:237.5px;text-align:center;">Refª: PAST FINA</span><span class="t " style="top:464.62px;font-size:24.75px;line-height:32px;color:#fff;font-weight:700;letter-spacing:-0.29px;left:1371.95px;width:257.5px;text-align:center;">Mil folhas</span><span class="t " style="top:494.62px;font-size:24.75px;line-height:32px;color:#fff;font-weight:700;letter-spacing:-0.656px;left:1371.77px;width:257.5px;text-align:center;">chocolate</span><span class="t " style="top:542.71px;font-size:19.60px;line-height:25px;color:#17a2b8;letter-spacing:-0.772px;left:1381.71px;width:237.5px;text-align:center;">Barras</span><span class="b badge" style="left:1477.85px;top:589.2px;width:46px;height:39px;font-size:25.72px;line-height:41.5px">1</span><div class="b" style="left:1392.3px;top:648.2px;width:180.0999999999999px;height:38.75px;background:#343a40;border:1px solid #6c757d;border-right:0;border-radius:4px 0 0 4px"></div><div class="b" style="left:1572.3999999999999px;top:648.2px;width:37px;height:38.75px;background:#f94722;border-radius:0 4px 4px 0"></div><svg class="ic" style="left:1582.91px;top:658.55px;width:16.19px;height:18.5px;" viewBox="0 0 448 512"><path fill="#fff" d="M416 208H272V64c0-17.67-14.33-32-32-32h-32c-17.67 0-32 14.33-32 32v144H32c-17.67 0-32 14.33-32 32v32c0 17.67 14.33 32 32 32h144v144c0 17.67 14.33 32 32 32h32c17.67 0 32-14.33 32-32V304h144c17.67 0 32-14.33 32-32v-32c0-17.67-14.33-32-32-32z"/></svg><div class="b btn" style="left:1382.1px;top:711.95px;width:237.5px;height:47.3px"></div><svg class="ic" style="left:1490.6px;top:726.0px;width:20.5px;height:20.5px;" viewBox="0 0 512 512"><path fill="#fff" d="M173.898 439.404l-166.4-166.4c-9.997-9.997-9.997-26.206 0-36.204l36.203-36.204c9.997-9.998 26.207-9.998 36.204 0L192 312.69 432.095 72.596c9.997-9.997 26.207-9.997 36.204 0l36.203 36.204c9.997 9.997 9.997 26.206 0 36.204l-294.4 294.401c-9.998 9.997-26.207 9.997-36.204-.001z"/></svg></article><article><div class="b icard" style="left:1638.4px;top:408.2px;width:237.5px;height:351.05px"></div><span class="t " style="top:436.91px;font-size:19.60px;line-height:25px;color:#adb5bd;letter-spacing:-0.679px;left:1638.06px;width:237.5px;text-align:center;">Refª: PAST FINA</span><span class="t " style="top:464.62px;font-size:24.75px;line-height:32px;color:#fff;font-weight:700;letter-spacing:-0.29px;left:1628.26px;width:257.5px;text-align:center;">Mil folhas</span><span class="t " style="top:494.62px;font-size:24.75px;line-height:32px;color:#fff;font-weight:700;letter-spacing:-0.417px;left:1628.19px;width:257.5px;text-align:center;">português</span><span class="t " style="top:542.71px;font-size:19.60px;line-height:25px;color:#17a2b8;letter-spacing:-0.772px;left:1638.01px;width:237.5px;text-align:center;">Barras</span><span class="b badge" style="left:1734.15px;top:589.2px;width:46px;height:39px;font-size:25.72px;line-height:41.5px">2</span><div class="b" style="left:1648.6000000000001px;top:648.2px;width:180.0999999999999px;height:38.75px;background:#343a40;border:1px solid #6c757d;border-right:0;border-radius:4px 0 0 4px"></div><div class="b" style="left:1828.7px;top:648.2px;width:37px;height:38.75px;background:#f94722;border-radius:0 4px 4px 0"></div><svg class="ic" style="left:1839.21px;top:658.55px;width:16.19px;height:18.5px;" viewBox="0 0 448 512"><path fill="#fff" d="M416 208H272V64c0-17.67-14.33-32-32-32h-32c-17.67 0-32 14.33-32 32v144H32c-17.67 0-32 14.33-32 32v32c0 17.67 14.33 32 32 32h144v144c0 17.67 14.33 32 32 32h32c17.67 0 32-14.33 32-32V304h144c17.67 0 32-14.33 32-32v-32c0-17.67-14.33-32-32-32z"/></svg><div class="b btn" style="left:1638.4px;top:711.95px;width:237.5px;height:47.3px"></div><svg class="ic" style="left:1746.9px;top:726.0px;width:20.5px;height:20.5px;" viewBox="0 0 512 512"><path fill="#fff" d="M173.898 439.404l-166.4-166.4c-9.997-9.997-9.997-26.206 0-36.204l36.203-36.204c9.997-9.998 26.207-9.998 36.204 0L192 312.69 432.095 72.596c9.997-9.997 26.207-9.997 36.204 0l36.203 36.204c9.997 9.997 9.997 26.206 0 36.204l-294.4 294.401c-9.998 9.997-26.207 9.997-36.204-.001z"/></svg></article><article><div class="b icard" style="left:356.9px;top:966px;width:237.5px;height:301.05px"></div><span class="t " style="top:994.71px;font-size:19.60px;line-height:25px;color:#adb5bd;letter-spacing:-0.017px;left:356.89px;width:237.5px;text-align:center;">Refª: Mini</span><span class="t " style="top:1023.12px;font-size:24.75px;line-height:32px;color:#fff;font-weight:700;letter-spacing:-0.263px;left:346.77px;width:257.5px;text-align:center;">Mini mil folhas</span><span class="t " style="top:1053.12px;font-size:24.75px;line-height:32px;color:#fff;font-weight:700;letter-spacing:-0.576px;left:346.61px;width:257.5px;text-align:center;">café</span><span class="b badge" style="left:452.65px;top:1097px;width:46px;height:39px;font-size:25.72px;line-height:41.5px">5</span><div class="b" style="left:367.09999999999997px;top:1156px;width:138.49999999999994px;height:38.75px;background:#343a40;border:1px solid #6c757d;border-radius:4px 0 0 4px"></div><div class="b" style="left:504.5999999999999px;top:1156px;width:42.6px;height:38.75px;background:#343a40;border:1px solid #6c757d;border-right:0"></div><span class="t " style="top:1165.36px;font-size:17.15px;line-height:22px;color:#fff;left:496.40px;width:60px;text-align:center;">KG</span><div class="b" style="left:547.1999999999999px;top:1156px;width:37px;height:38.75px;background:#f94722;border-radius:0 4px 4px 0"></div><svg class="ic" style="left:557.71px;top:1166.35px;width:16.19px;height:18.5px;" viewBox="0 0 448 512"><path fill="#fff" d="M416 208H272V64c0-17.67-14.33-32-32-32h-32c-17.67 0-32 14.33-32 32v144H32c-17.67 0-32 14.33-32 32v32c0 17.67 14.33 32 32 32h144v144c0 17.67 14.33 32 32 32h32c17.67 0 32-14.33 32-32V304h144c17.67 0 32-14.33 32-32v-32c0-17.67-14.33-32-32-32z"/></svg><div class="b btn" style="left:356.9px;top:1219.75px;width:237.5px;height:47.3px"></div><svg class="ic" style="left:465.4px;top:1233.8px;width:20.5px;height:20.5px;" viewBox="0 0 512 512"><path fill="#fff" d="M173.898 439.404l-166.4-166.4c-9.997-9.997-9.997-26.206 0-36.204l36.203-36.204c9.997-9.998 26.207-9.998 36.204 0L192 312.69 432.095 72.596c9.997-9.997 26.207-9.997 36.204 0l36.203 36.204c9.997 9.997 9.997 26.206 0 36.204l-294.4 294.401c-9.998 9.997-26.207 9.997-36.204-.001z"/></svg></article><article><div class="b icard" style="left:613.2px;top:966px;width:237.5px;height:351.05px"></div><span class="t " style="top:994.71px;font-size:19.60px;line-height:25px;color:#adb5bd;letter-spacing:-0.017px;left:613.19px;width:237.5px;text-align:center;">Refª: Mini</span><span class="t " style="top:1023.12px;font-size:24.75px;line-height:32px;color:#fff;font-weight:700;letter-spacing:-0.279px;left:603.06px;width:257.5px;text-align:center;">Mini natas</span><span class="t " style="top:1100.51px;font-size:19.60px;line-height:25px;color:#17a2b8;letter-spacing:-0.092px;left:613.15px;width:237.5px;text-align:center;">Tabuleiros</span><span class="b badge" style="left:708.95px;top:1147px;width:46px;height:39px;font-size:25.72px;line-height:41.5px">4</span><div class="b" style="left:623.4000000000001px;top:1206px;width:180.0999999999999px;height:38.75px;background:#343a40;border:1px solid #6c757d;border-right:0;border-radius:4px 0 0 4px"></div><div class="b" style="left:803.5px;top:1206px;width:37px;height:38.75px;background:#f94722;border-radius:0 4px 4px 0"></div><svg class="ic" style="left:814.01px;top:1216.35px;width:16.19px;height:18.5px;" viewBox="0 0 448 512"><path fill="#fff" d="M416 208H272V64c0-17.67-14.33-32-32-32h-32c-17.67 0-32 14.33-32 32v144H32c-17.67 0-32 14.33-32 32v32c0 17.67 14.33 32 32 32h144v144c0 17.67 14.33 32 32 32h32c17.67 0 32-14.33 32-32V304h144c17.67 0 32-14.33 32-32v-32c0-17.67-14.33-32-32-32z"/></svg><div class="b btn" style="left:613.2px;top:1269.75px;width:237.5px;height:47.3px"></div><svg class="ic" style="left:721.7px;top:1283.8px;width:20.5px;height:20.5px;" viewBox="0 0 512 512"><path fill="#fff" d="M173.898 439.404l-166.4-166.4c-9.997-9.997-9.997-26.206 0-36.204l36.203-36.204c9.997-9.998 26.207-9.998 36.204 0L192 312.69 432.095 72.596c9.997-9.997 26.207-9.997 36.204 0l36.203 36.204c9.997 9.997 9.997 26.206 0 36.204l-294.4 294.401c-9.998 9.997-26.207 9.997-36.204-.001z"/></svg></article><article><div class="b icard" style="left:869.5px;top:966px;width:237.5px;height:301.05px"></div><span class="t " style="top:994.71px;font-size:19.60px;line-height:25px;color:#adb5bd;letter-spacing:-0.017px;left:869.49px;width:237.5px;text-align:center;">Refª: Mini</span><span class="t " style="top:1023.12px;font-size:24.75px;line-height:32px;color:#fff;font-weight:700;letter-spacing:-0.303px;left:859.35px;width:257.5px;text-align:center;">Mini rins</span><span class="b badge" style="left:965.25px;top:1097px;width:46px;height:39px;font-size:25.72px;line-height:41.5px">4</span><div class="b" style="left:879.7px;top:1156px;width:138.4999999999999px;height:38.75px;background:#343a40;border:1px solid #6c757d;border-radius:4px 0 0 4px"></div><div class="b" style="left:1017.1999999999999px;top:1156px;width:42.6px;height:38.75px;background:#343a40;border:1px solid #6c757d;border-right:0"></div><span class="t " style="top:1165.36px;font-size:17.15px;line-height:22px;color:#fff;left:1009.00px;width:60px;text-align:center;">KG</span><div class="b" style="left:1059.8px;top:1156px;width:37px;height:38.75px;background:#f94722;border-radius:0 4px 4px 0"></div><svg class="ic" style="left:1070.31px;top:1166.35px;width:16.19px;height:18.5px;" viewBox="0 0 448 512"><path fill="#fff" d="M416 208H272V64c0-17.67-14.33-32-32-32h-32c-17.67 0-32 14.33-32 32v144H32c-17.67 0-32 14.33-32 32v32c0 17.67 14.33 32 32 32h144v144c0 17.67 14.33 32 32 32h32c17.67 0 32-14.33 32-32V304h144c17.67 0 32-14.33 32-32v-32c0-17.67-14.33-32-32-32z"/></svg><div class="b btn" style="left:869.5px;top:1219.75px;width:237.5px;height:47.3px"></div><svg class="ic" style="left:978.0px;top:1233.8px;width:20.5px;height:20.5px;" viewBox="0 0 512 512"><path fill="#fff" d="M173.898 439.404l-166.4-166.4c-9.997-9.997-9.997-26.206 0-36.204l36.203-36.204c9.997-9.998 26.207-9.998 36.204 0L192 312.69 432.095 72.596c9.997-9.997 26.207-9.997 36.204 0l36.203 36.204c9.997 9.997 9.997 26.206 0 36.204l-294.4 294.401c-9.998 9.997-26.207 9.997-36.204-.001z"/></svg></article><article><div class="b icard" style="left:1125.8000000000002px;top:966px;width:237.5px;height:351.05px"></div><span class="t " style="top:994.71px;font-size:19.60px;line-height:25px;color:#adb5bd;letter-spacing:-0.017px;left:1125.79px;width:237.5px;text-align:center;">Refª: Mini</span><span class="t " style="top:1023.12px;font-size:24.75px;line-height:32px;color:#fff;font-weight:700;letter-spacing:-0.494px;left:1115.55px;width:257.5px;text-align:center;">Mini soraias d'ovo</span><span class="t " style="top:1100.51px;font-size:19.60px;line-height:25px;color:#17a2b8;letter-spacing:-0.212px;left:1125.69px;width:237.5px;text-align:center;">UN</span><span class="b badge" style="left:1214.05px;top:1147px;width:61px;height:39px;font-size:25.72px;line-height:41.5px">31</span><div class="b" style="left:1136.0000000000002px;top:1206px;width:180.0999999999999px;height:38.75px;background:#343a40;border:1px solid #6c757d;border-right:0;border-radius:4px 0 0 4px"></div><div class="b" style="left:1316.1000000000001px;top:1206px;width:37px;height:38.75px;background:#f94722;border-radius:0 4px 4px 0"></div><svg class="ic" style="left:1326.61px;top:1216.35px;width:16.19px;height:18.5px;" viewBox="0 0 448 512"><path fill="#fff" d="M416 208H272V64c0-17.67-14.33-32-32-32h-32c-17.67 0-32 14.33-32 32v144H32c-17.67 0-32 14.33-32 32v32c0 17.67 14.33 32 32 32h144v144c0 17.67 14.33 32 32 32h32c17.67 0 32-14.33 32-32V304h144c17.67 0 32-14.33 32-32v-32c0-17.67-14.33-32-32-32z"/></svg><div class="b btn" style="left:1125.8000000000002px;top:1269.75px;width:237.5px;height:47.3px"></div><svg class="ic" style="left:1234.3px;top:1283.8px;width:20.5px;height:20.5px;" viewBox="0 0 512 512"><path fill="#fff" d="M173.898 439.404l-166.4-166.4c-9.997-9.997-9.997-26.206 0-36.204l36.203-36.204c9.997-9.998 26.207-9.998 36.204 0L192 312.69 432.095 72.596c9.997-9.997 26.207-9.997 36.204 0l36.203 36.204c9.997 9.997 9.997 26.206 0 36.204l-294.4 294.401c-9.998 9.997-26.207 9.997-36.204-.001z"/></svg></article><article><div class="b icard" style="left:1382.1px;top:966px;width:237.5px;height:351.05px"></div><span class="t " style="top:994.71px;font-size:19.60px;line-height:25px;color:#adb5bd;letter-spacing:-0.017px;left:1382.09px;width:237.5px;text-align:center;">Refª: Mini</span><span class="t " style="top:1023.12px;font-size:24.75px;line-height:32px;color:#fff;font-weight:700;letter-spacing:-0.511px;left:1371.84px;width:257.5px;text-align:center;">Mini soraias de</span><span class="t " style="top:1053.12px;font-size:24.75px;line-height:32px;color:#fff;font-weight:700;letter-spacing:-0.656px;left:1371.77px;width:257.5px;text-align:center;">chocolate</span><span class="t " style="top:1100.51px;font-size:19.60px;line-height:25px;color:#17a2b8;letter-spacing:-0.212px;left:1381.99px;width:237.5px;text-align:center;">UN</span><span class="b badge" style="left:1470.35px;top:1147px;width:61px;height:39px;font-size:25.72px;line-height:41.5px">26</span><div class="b" style="left:1392.3px;top:1206px;width:180.0999999999999px;height:38.75px;background:#343a40;border:1px solid #6c757d;border-right:0;border-radius:4px 0 0 4px"></div><div class="b" style="left:1572.3999999999999px;top:1206px;width:37px;height:38.75px;background:#f94722;border-radius:0 4px 4px 0"></div><svg class="ic" style="left:1582.91px;top:1216.35px;width:16.19px;height:18.5px;" viewBox="0 0 448 512"><path fill="#fff" d="M416 208H272V64c0-17.67-14.33-32-32-32h-32c-17.67 0-32 14.33-32 32v144H32c-17.67 0-32 14.33-32 32v32c0 17.67 14.33 32 32 32h144v144c0 17.67 14.33 32 32 32h32c17.67 0 32-14.33 32-32V304h144c17.67 0 32-14.33 32-32v-32c0-17.67-14.33-32-32-32z"/></svg><div class="b btn" style="left:1382.1px;top:1269.75px;width:237.5px;height:47.3px"></div><svg class="ic" style="left:1490.6px;top:1283.8px;width:20.5px;height:20.5px;" viewBox="0 0 512 512"><path fill="#fff" d="M173.898 439.404l-166.4-166.4c-9.997-9.997-9.997-26.206 0-36.204l36.203-36.204c9.997-9.998 26.207-9.998 36.204 0L192 312.69 432.095 72.596c9.997-9.997 26.207-9.997 36.204 0l36.203 36.204c9.997 9.997 9.997 26.206 0 36.204l-294.4 294.401c-9.998 9.997-26.207 9.997-36.204-.001z"/></svg></article><article><div class="b icard" style="left:1638.4px;top:966px;width:237.5px;height:351.05px"></div><span class="t " style="top:994.71px;font-size:19.60px;line-height:25px;color:#adb5bd;letter-spacing:-0.586px;left:1638.11px;width:237.5px;text-align:center;">Refª: Past</span><span class="t " style="top:1023.12px;font-size:24.75px;line-height:32px;color:#fff;font-weight:700;letter-spacing:-0.636px;left:1628.08px;width:257.5px;text-align:center;">Pastel de nata</span><span class="t " style="top:1100.51px;font-size:19.60px;line-height:25px;color:#17a2b8;letter-spacing:-0.092px;left:1638.35px;width:237.5px;text-align:center;">Tabuleiros</span><span class="b badge" style="left:1726.65px;top:1147px;width:61px;height:39px;font-size:25.72px;line-height:41.5px">26</span><div class="b" style="left:1648.6000000000001px;top:1206px;width:180.0999999999999px;height:38.75px;background:#343a40;border:1px solid #6c757d;border-right:0;border-radius:4px 0 0 4px"></div><div class="b" style="left:1828.7px;top:1206px;width:37px;height:38.75px;background:#f94722;border-radius:0 4px 4px 0"></div><svg class="ic" style="left:1839.21px;top:1216.35px;width:16.19px;height:18.5px;" viewBox="0 0 448 512"><path fill="#fff" d="M416 208H272V64c0-17.67-14.33-32-32-32h-32c-17.67 0-32 14.33-32 32v144H32c-17.67 0-32 14.33-32 32v32c0 17.67 14.33 32 32 32h144v144c0 17.67 14.33 32 32 32h32c17.67 0 32-14.33 32-32V304h144c17.67 0 32-14.33 32-32v-32c0-17.67-14.33-32-32-32z"/></svg><div class="b btn" style="left:1638.4px;top:1269.75px;width:237.5px;height:47.3px"></div><svg class="ic" style="left:1746.9px;top:1283.8px;width:20.5px;height:20.5px;" viewBox="0 0 512 512"><path fill="#fff" d="M173.898 439.404l-166.4-166.4c-9.997-9.997-9.997-26.206 0-36.204l36.203-36.204c9.997-9.998 26.207-9.998 36.204 0L192 312.69 432.095 72.596c9.997-9.997 26.207-9.997 36.204 0l36.203 36.204c9.997 9.997 9.997 26.206 0 36.204l-294.4 294.401c-9.998 9.997-26.207 9.997-36.204-.001z"/></svg></article><footer class="b" style="left:312.5px;top:1382px;width:1607.5px;height:91px;background:#343a40;border-top:1px solid #4b545c"></footer><svg class="ic" style="left:332px;top:1402px;width:50px;height:52px" viewBox="0 0 1416 1473"><defs><linearGradient id="sw1g" x1=".3" y1="0" x2=".62" y2="1"><stop offset="0" stop-color="#f23207"/><stop offset=".5" stop-color="#e53209"/><stop offset=".78" stop-color="#b33019"/><stop offset="1" stop-color="#862e25"/></linearGradient></defs>
<circle cx="705" cy="740" r="620" fill="url(#sw1g)"/>
<g fill="none" stroke="#343a40" stroke-width="146" stroke-linecap="round">
<path d="M328 150V800A290 238 0 0 0 620 1036 285 258 0 0 0 905 790 150 150 0 0 0 872 668"/>
<path d="M328 150V800A290 238 0 0 0 620 1036 285 258 0 0 0 905 790 150 150 0 0 0 872 668" transform="rotate(180 695 745)"/>
</g>
<ellipse cx="695" cy="750" rx="205" ry="118" fill="#343a40" transform="rotate(-15 695 750)"/>
<path d="M470 900Q600 990 745 870" fill="none" stroke="#d9330d" stroke-width="40" stroke-linecap="round"/>
<path d="M920 590Q790 500 645 620" fill="none" stroke="#e6330a" stroke-width="40" stroke-linecap="round"/>
<circle cx="600" cy="775" r="84" fill="#e8330a"/><circle cx="790" cy="725" r="84" fill="#ee3308"/></svg><svg class="ic" style="left:384px;top:1402px;width:120px;height:54px" viewBox="0 0 1920 864"><g fill="none" stroke="#0b0a09" stroke-width="80">
<path d="M109 130V555M258 245V555M428 130V555M1158 245V555M1640 245V555"/>
<circle cx="562" cy="400" r="122"/>
<path d="M1010 468A122 122 0 1 1 1019 372"/>
<circle cx="1512" cy="400" r="122"/>
<path d="M1158 400A135 135 0 0 1 1305 282" stroke-width="76"/>
<path d="M872 372Q930 452 1030 372" stroke-width="58" stroke-linecap="round"/>
</g>
<path d="M262 108a58 58 0 0 1 56 66q-10 36-58 44-40 10-52-2 6-30 2-58a56 56 0 0 1 52-50z" fill="#ee3308"/><circle cx="1770" cy="520" r="42" fill="none" stroke="#1c1f23" stroke-width="14"/><text x="1770" y="545" font-size="60" font-weight="700" text-anchor="middle" fill="#1c1f23" font-family="Liberation Sans, sans-serif">R</text><text x="66" y="765" font-size="108" textLength="1610" lengthAdjust="spacingAndGlyphs" fill="#1f2327" font-family="Liberation Sans, sans-serif">Plataforma de encomendas</text></svg><svg class="ic" style="left:504px;top:1400px;width:120px;height:54px" viewBox="0 0 1920 864"><defs><linearGradient id="svr" x1="0" y1="0" x2="0" y2="1"><stop offset="0" stop-color="#0a5cab"/><stop offset=".7" stop-color="#0b5aa9"/><stop offset="1" stop-color="#2b3c9f"/></linearGradient>
<radialGradient id="sve" cx=".55" cy=".35" r=".7"><stop offset="0" stop-color="#0c2f7e"/><stop offset=".55" stop-color="#1552ad"/><stop offset="1" stop-color="#1a66c4"/></radialGradient></defs>
<g fill="#696b6f">
<path d="M95 215L205 110H465V215z"/><path d="M95 235H215V345H95z"/><path d="M235 345H345L465 455V555H345V455H235z"/><path d="M95 530H215V556H95z" fill="#5b5d61"/><path d="M95 572H465L355 672H95z"/>
<path d="M1075 110H1590V215H1150z"/><path d="M1230 235H1350V670H1230z"/>
<path d="M1635 110H1680L1795 215V670H1680V215H1635z"/>
</g>
<path d="M1150 215H1590V232H1230z" fill="#55575b"/>
<path d="M510 115H600L940 670H800L510 200z" fill="#0b5dae"/>
<path d="M510 115H562L532 188 510 205z" fill="#1c2f92"/>
<path d="M1000 115L1095 215 945 670 862 538z" fill="url(#svr)"/>
<path d="M915 115H1000L952 215H915z" fill="#1b2e8f"/>
<circle cx="775" cy="125" r="90" fill="url(#sve)"/><circle cx="792" cy="100" r="36" fill="#05070c"/><circle cx="750" cy="82" r="15" fill="#fff"/>
<text x="84" y="790" font-size="74" font-weight="700" textLength="1706" lengthAdjust="spacingAndGlyphs" fill="#14171b" font-family="Liberation Sans, sans-serif">soluções de vigilância e tecnologias de informação</text></svg><div class="b" style="left:1831px;top:1389px;width:64px;height:60px;background:#a5422e;border-radius:5px"></div><svg class="ic" style="left:1852.04px;top:1406.55px;width:22.31px;height:25.5px;" viewBox="0 0 448 512"><path fill="#a9adb0" d="M240.971 130.524l194.343 194.343c9.373 9.373 9.373 24.569 0 33.941l-22.667 22.667c-9.357 9.357-24.522 9.375-33.901.04L224 227.495 69.255 381.516c-9.379 9.335-24.544 9.317-33.901-.04l-22.667-22.667c-9.373-9.373-9.373-24.569 0-33.941L207.03 130.525c9.372-9.373 24.568-9.373 33.941-.001z"/></svg><aside class="b" style="left:0;top:0;width:312.5px;height:1473px;background:#212226;box-shadow:0 14px 28px rgba(0,0,0,.25),0 10px 10px rgba(0,0,0,.22)"><div class="b" style="left:0;top:70px;width:312.5px;height:1px;background:#4b545c"></div><div class="b" style="left:10px;top:13px;width:75px;height:22px;background:#d8d8d8;box-shadow:0 10px 20px rgba(0,0,0,.19),0 6px 6px rgba(0,0,0,.23)"></div><svg class="ic" style="left:10.6px;top:13.8px;width:20.4px;height:20.6px;opacity:.85" viewBox="60 95 1300 1300"><defs><linearGradient id="sw2g" x1=".3" y1="0" x2=".62" y2="1"><stop offset="0" stop-color="#f23207"/><stop offset=".5" stop-color="#e53209"/><stop offset=".78" stop-color="#b33019"/><stop offset="1" stop-color="#862e25"/></linearGradient></defs>
<circle cx="705" cy="740" r="620" fill="url(#sw2g)"/>
<g fill="none" stroke="#d8d8d8" stroke-width="146" stroke-linecap="round">
<path d="M328 150V800A290 238 0 0 0 620 1036 285 258 0 0 0 905 790 150 150 0 0 0 872 668"/>
<path d="M328 150V800A290 238 0 0 0 620 1036 285 258 0 0 0 905 790 150 150 0 0 0 872 668" transform="rotate(180 695 745)"/>
</g>
<ellipse cx="695" cy="750" rx="205" ry="118" fill="#d8d8d8" transform="rotate(-15 695 750)"/>
<path d="M470 900Q600 990 745 870" fill="none" stroke="#d9330d" stroke-width="40" stroke-linecap="round"/>
<path d="M920 590Q790 500 645 620" fill="none" stroke="#e6330a" stroke-width="40" stroke-linecap="round"/>
<circle cx="600" cy="775" r="84" fill="#e8330a"/><circle cx="790" cy="725" r="84" fill="#ee3308"/></svg><svg class="ic" style="left:32.75px;top:12.4px;width:55.1px;height:24px;opacity:.82" viewBox="0 0 1920 864" preserveAspectRatio="none"><g fill="none" stroke="#0b0a09" stroke-width="80">
<path d="M109 130V555M258 245V555M428 130V555M1158 245V555M1640 245V555"/>
<circle cx="562" cy="400" r="122"/>
<path d="M1010 468A122 122 0 1 1 1019 372"/>
<circle cx="1512" cy="400" r="122"/>
<path d="M1158 400A135 135 0 0 1 1305 282" stroke-width="76"/>
<path d="M872 372Q930 452 1030 372" stroke-width="58" stroke-linecap="round"/>
</g>
<path d="M262 108a58 58 0 0 1 56 66q-10 36-58 44-40 10-52-2 6-30 2-58a56 56 0 0 1 52-50z" fill="#ee3308"/><circle cx="1770" cy="520" r="40" fill="#777"/><rect x="66" y="700" width="1600" height="56" fill="#a2a2a2"/></svg><span class="t " style="top:19.63px;font-size:25.60px;line-height:33px;color:#b9bcc1;letter-spacing:-1.625px;left:101.00px;">Libera v1.0</span><svg class="ic" style="left:21.81px;top:102.0px;width:18.38px;height:21px;" viewBox="0 0 448 512"><path fill="#c2c7d0" d="M224 256c70.7 0 128-57.3 128-128S294.7 0 224 0 96 57.3 96 128s57.3 128 128 128zm89.6 32h-16.7c-22.2 10.2-46.9 16-72.9 16s-50.6-5.8-72.9-16h-16.7C60.2 288 0 348.2 0 422.400V464c0 26.5 21.5 48 48 48h352c26.5 0 48-21.5 48-48v-41.6c0-74.2-60.2-134.4-134.4-134.4z"/></svg><span class="t " style="top:100.71px;font-size:19.60px;line-height:25px;color:#c2c7d0;letter-spacing:-0.324px;left:52.00px;">Dev</span><div class="b" style="left:10px;top:154px;width:293px;height:1px;background:#4f5962"></div><ul><li><svg class="ic" style="left:34.43px;top:189.15px;width:25.54px;height:22.7px;" viewBox="0 0 576 512"><path fill="#c2c7d0" d="M288 32C128.94 32 0 160.94 0 320c0 52.8 14.25 102.26 39.06 144.8 5.61 9.62 16.3 15.2 27.44 15.2h443c11.14 0 21.83-5.58 27.44-15.2C561.75 422.26 576 372.8 576 320c0-159.06-128.94-288-288-288zm0 64c14.71 0 26.58 10.13 30.32 23.65-1.11 2.26-2.64 4.23-3.45 6.67l-9.22 27.67c-5.13 3.49-10.97 6.01-17.64 6.01-17.67 0-32-14.33-32-32S270.33 96 288 96zM96 384c-17.67 0-32-14.33-32-32s14.33-32 32-32 32 14.33 32 32-14.33 32-32 32zm48-160c-17.67 0-32-14.33-32-32s14.33-32 32-32 32 14.33 32 32-14.33 32-32 32zm246.77-72.41l-61.33 184C343.13 347.33 352 364.54 352 384c0 11.72-3.38 22.55-8.88 32H232.88c-5.5-9.45-8.88-20.28-8.88-32 0-33.94 26.5-61.43 59.9-63.59l61.34-184.01c4.17-12.56 17.73-19.45 30.36-15.17 12.57 4.19 19.35 17.79 15.17 30.36zm14.66 57.2l15.52-46.55c3.47-1.29 7.13-2.23 11.05-2.23 17.67 0 32 14.33 32 32s-14.33 32-32 32c-11.38-.01-20.89-6.28-26.57-15.22zM480 384c-17.67 0-32-14.33-32-32s14.33-32 32-32 32 14.33 32 32-14.33 32-32 32z"/></svg><span class="t " style="top:188.51px;font-size:19.60px;line-height:25px;color:#c2c7d0;letter-spacing:-0.03px;left:73.00px;">Dashboard</span></li><li><svg class="ic" style="left:34.43px;top:243.15px;width:25.54px;height:22.7px;" viewBox="0 0 576 512"><path fill="#c2c7d0" d="M402.6 83.2l90.2 90.2c3.8 3.8 3.8 10 0 13.8L274.4 405.6l-92.8 10.3c-12.4 1.4-22.9-9.1-21.5-21.5l10.3-92.8L388.8 83.2c3.8-3.8 10-3.8 13.8 0zm162-22.9l-48.8-48.8c-15.2-15.2-39.9-15.2-55.2 0l-35.4 35.4c-3.8 3.8-3.8 10 0 13.8l90.2 90.2c3.8 3.8 10 3.8 13.8 0l35.4-35.4c15.2-15.3 15.2-40 0-55.2zM384 346.2V448H64V128h229.8c3.2 0 6.2-1.3 8.500-3.5l40-40c7.6-7.6 2.2-20.5-8.5-20.5H48C21.5 64 0 85.5 0 112v352c0 26.5 21.5 48 48 48h352c26.5 0 48-21.5 48-48V306.2c0-10.7-12.9-16-20.5-8.5l-40 40c-2.2 2.3-3.5 5.3-3.5 8.5z"/></svg><span class="t " style="top:242.51px;font-size:19.60px;line-height:25px;color:#c2c7d0;letter-spacing:-0.349px;left:73.00px;">Encomendas</span></li><li><svg class="ic" style="left:34.43px;top:297.15px;width:25.54px;height:22.7px;" viewBox="0 0 576 512"><path fill="#c2c7d0" d="M136.309 189.836L312.313 37.851C327.72 24.546 352 35.348 352 56.015v82.763c129.182 10.231 224 52.212 224 183.548 0 61.441-39.582 122.309-83.333 154.132-13.653 9.931-33.111-2.533-28.077-18.631 38.512-123.162-3.922-169.482-112.59-182.015v84.175c0 20.701-24.3 31.453-39.687 18.164L136.309 226.164c-11.071-9.561-11.086-26.753 0-36.328zm-128 36.328L184.313 378.15C199.72 391.455 224 380.653 224 359.986v-15.818l-108.606-93.785A55.96 55.96 0 0 1 96 207.998a55.953 55.953 0 0 1 19.393-42.38L224 71.832V56.015c0-20.667-24.28-31.469-39.687-18.164L8.309 189.836c-11.086 9.575-11.071 26.767 0 36.328z"/></svg><span class="t " style="top:296.51px;font-size:19.60px;line-height:25px;color:#c2c7d0;letter-spacing:-0.203px;left:73.00px;">Retornos</span><svg class="ic" style="left:272.88px;top:295.75px;width:10.25px;height:20.5px;" viewBox="0 0 256 512"><path fill="#c2c7d0" d="M31.7 239l136-136c9.4-9.4 24.6-9.4 33.9 0l22.6 22.6c9.4 9.4 9.4 24.6 0 33.9L127.9 256l96.4 96.4c9.4 9.4 9.4 24.6 0 33.9L201.7 409c-9.4 9.4-24.6 9.4-33.9 0l-136-136c-9.5-9.4-9.5-24.6-.1-34z"/></svg></li><li><div class="b" style="left:10px;top:337.0px;width:293px;height:50px;background:#f94722;border-radius:5px;box-shadow:0 1px 3px rgba(0,0,0,.12),0 1px 2px rgba(0,0,0,.24)"></div><svg class="ic" style="left:33.01px;top:351.15px;width:28.38px;height:22.7px;" viewBox="0 0 640 512"><path fill="#fff" d="M144 256h352c8.8 0 16-7.2 16-16V16c0-8.8-7.2-16-16-16H384v128l-64-32-64 32V0H144c-8.8 0-16 7.2-16 16v224c0 8.8 7.2 16 16 16zm480 128c8.8 0 16-7.2 16-16v-32c0-8.8-7.2-16-16-16H16c-8.8 0-16 7.2-16 16v32c0 8.8 7.2 16 16 16h48v64H16c-8.8 0-16 7.2-16 16v32c0 8.8 7.2 16 16 16h608c8.8 0 16-7.2 16-16v-32c0-8.8-7.2-16-16-16h-48v-64h48zm-336 64H128v-64h160v64zm224 0H352v-64h160v64z"/></svg><span class="t " style="top:350.51px;font-size:19.60px;line-height:25px;color:#fff;letter-spacing:-0.125px;left:73.00px;">Produção</span></li><li><svg class="ic" style="left:33.01px;top:405.15px;width:28.38px;height:22.7px;" viewBox="0 0 640 512"><path fill="#c2c7d0" d="M624 352h-16V243.9c0-12.7-5.1-24.9-14.1-33.9L494 110.1c-9-9-21.2-14.1-33.9-14.1H416V48c0-26.5-21.5-48-48-48H48C21.5 0 0 21.5 0 48v320c0 26.5 21.5 48 48 48h16c0 53 43 96 96 96s96-43 96-96h128c0 53 43 96 96 96s96-43 96-96h48c8.8 0 16-7.2 16-16v-32c0-8.8-7.2-16-16-16zM160 464c-26.5 0-48-21.5-48-48s21.5-48 48-48 48 21.5 48 48-21.5 48-48 48zm320 0c-26.5 0-48-21.5-48-48s21.5-48 48-48 48 21.5 48 48-21.5 48-48 48zm80-208H416V144h44.1l99.9 99.9V256z"/></svg><span class="t " style="top:404.51px;font-size:19.60px;line-height:25px;color:#c2c7d0;letter-spacing:0.209px;left:73.00px;">Distribuição</span></li><li><svg class="ic" style="left:34.43px;top:459.15px;width:25.54px;height:22.7px;" viewBox="0 0 576 512"><path fill="#c2c7d0" d="M288 0c-69.59 0-126 56.41-126 126 0 56.26 82.35 158.8 113.9 196.02 6.39 7.54 17.82 7.54 24.2 0C331.65 284.8 414 182.26 414 126 414 56.41 357.59 0 288 0zm0 168c-23.2 0-42-18.8-42-42s18.8-42 42-42 42 18.8 42 42-18.8 42-42 42zM20.12 215.95A32.006 32.006 0 0 0 0 245.66v250.32c0 11.32 11.43 19.06 21.94 14.86L160 448V214.92c-8.84-15.98-16.07-31.54-21.25-46.42L20.12 215.95zM288 359.67c-14.07 0-27.38-6.18-36.51-16.96-19.66-23.2-40.57-49.62-59.49-76.72v182l192 64V266c-18.92 27.09-39.82 53.52-59.49 76.72-9.13 10.77-22.44 16.95-36.51 16.95zm266.06-198.51L416 224v288l139.88-55.95A31.996 31.996 0 0 0 576 426.34V176.02c0-11.32-11.43-19.06-21.94-14.86z"/></svg><span class="t " style="top:458.51px;font-size:19.60px;line-height:25px;color:#c2c7d0;letter-spacing:-0.62px;left:73.00px;">Rotas</span></li><li><svg class="ic" style="left:35.3px;top:515.7px;width:23.2px;height:16.6px" viewBox="0 0 57.5 43" preserveAspectRatio="none"><rect x="0" y="0" width="2" height="43" fill="#c2c7d0"/><rect x="3.2" y="0" width="1" height="43" fill="#c2c7d0"/><rect x="6.2" y="0" width="1" height="43" fill="#c2c7d0"/><rect x="11.2" y="0" width="1" height="43" fill="#c2c7d0"/><rect x="15.2" y="0" width="2" height="43" fill="#c2c7d0"/><rect x="20.3" y="0" width="1" height="43" fill="#c2c7d0"/><rect x="22.3" y="0" width="1" height="43" fill="#c2c7d0"/><rect x="24.3" y="0" width="1" height="43" fill="#c2c7d0"/><rect x="28.3" y="0" width="2" height="43" fill="#c2c7d0"/><rect x="33.4" y="0" width="2" height="43" fill="#c2c7d0"/><rect x="37.4" y="0" width="2" height="43" fill="#c2c7d0"/><rect x="41.4" y="0" width="2" height="43" fill="#c2c7d0"/><rect x="44.4" y="0" width="2" height="43" fill="#c2c7d0"/><rect x="49.5" y="0" width="3" height="43" fill="#c2c7d0"/><rect x="53.5" y="0" width="1" height="43" fill="#c2c7d0"/><rect x="55.5" y="0" width="2" height="43" fill="#c2c7d0"/></svg><span class="t " style="top:512.51px;font-size:19.60px;line-height:25px;color:#c2c7d0;letter-spacing:0.301px;left:73.00px;">Artigos</span><svg class="ic" style="left:272.88px;top:511.75px;width:10.25px;height:20.5px;" viewBox="0 0 256 512"><path fill="#c2c7d0" d="M31.7 239l136-136c9.4-9.4 24.6-9.4 33.9 0l22.6 22.6c9.4 9.4 9.4 24.6 0 33.9L127.9 256l96.4 96.4c9.4 9.4 9.4 24.6 0 33.9L201.7 409c-9.4 9.4-24.6 9.4-33.9 0l-136-136c-9.5-9.4-9.5-24.6-.1-34z"/></svg></li><li><svg class="ic" style="left:34.43px;top:567.15px;width:25.54px;height:22.7px;" viewBox="0 0 576 512"><path fill="#c2c7d0" d="M572.694 292.093L500.27 416.248A63.997 63.997 0 0 1 444.989 448H45.025c-18.523 0-30.064-20.093-20.731-36.093l72.424-124.155A64 64 0 0 1 152 256h399.964c18.523 0 30.064 20.093 20.73 36.093zM152 224h328v-48c0-26.51-21.49-48-48-48H272l-64-64H48C21.49 64 0 85.49 0 112v278.046l69.077-118.418C86.214 242.25 117.989 224 152 224z"/></svg><span class="t " style="top:566.51px;font-size:19.60px;line-height:25px;color:#c2c7d0;letter-spacing:-0.557px;left:73.00px;">Famílias</span><svg class="ic" style="left:272.88px;top:565.75px;width:10.25px;height:20.5px;" viewBox="0 0 256 512"><path fill="#c2c7d0" d="M31.7 239l136-136c9.4-9.4 24.6-9.4 33.9 0l22.6 22.6c9.4 9.4 9.4 24.6 0 33.9L127.9 256l96.4 96.4c9.4 9.4 9.4 24.6 0 33.9L201.7 409c-9.4 9.4-24.6 9.4-33.9 0l-136-136c-9.5-9.4-9.5-24.6-.1-34z"/></svg></li><li><svg class="ic" style="left:33.01px;top:621.15px;width:28.38px;height:22.7px;" viewBox="0 0 640 512"><path fill="#c2c7d0" d="M192 256c61.9 0 112-50.1 112-112S253.9 32 192 32 80 82.1 80 144s50.1 112 112 112zm76.8 32h-8.3c-20.8 10-43.9 16-68.5 16s-47.6-6-68.5-16h-8.3C51.6 288 0 339.6 0 403.2V432c0 26.5 21.5 48 48 48h288c26.5 0 48-21.5 48-48v-28.8c0-63.6-51.6-115.2-115.2-115.2zM480 256c53 0 96-43 96-96s-43-96-96-96-96 43-96 96 43 96 96 96zm48 32h-3.8c-13.9 4.8-28.6 8-44.2 8s-30.3-3.2-44.2-8H432c-20.4 0-39.2 5.9-55.7 15.4 24.4 26.3 39.7 61.2 39.7 99.8v38.4c0 2.2-.5 4.3-.6 6.400H592c26.5 0 48-21.5 48-48 0-61.9-50.1-112-112-112z"/></svg><span class="t " style="top:620.51px;font-size:19.60px;line-height:25px;color:#c2c7d0;letter-spacing:-0.214px;left:73.00px;">Clientes</span><svg class="ic" style="left:272.88px;top:619.75px;width:10.25px;height:20.5px;" viewBox="0 0 256 512"><path fill="#c2c7d0" d="M31.7 239l136-136c9.4-9.4 24.6-9.4 33.9 0l22.6 22.6c9.4 9.4 9.4 24.6 0 33.9L127.9 256l96.4 96.4c9.4 9.4 9.4 24.6 0 33.9L201.7 409c-9.4 9.4-24.6 9.4-33.9 0l-136-136c-9.5-9.4-9.5-24.6-.1-34z"/></svg></li><li><svg class="ic" style="left:33.01px;top:675.15px;width:28.38px;height:22.7px;" viewBox="0 0 640 512"><path fill="#c2c7d0" d="M610.5 341.3c2.6-14.1 2.6-28.5 0-42.6l25.8-14.9c3-1.7 4.3-5.2 3.3-8.5-6.7-21.6-18.2-41.2-33.2-57.4-2.3-2.5-6-3.1-9-1.4l-25.8 14.9c-10.9-9.3-23.4-16.5-36.9-21.3v-29.8c0-3.4-2.4-6.4-5.7-7.1-22.3-5-45-4.8-66.2 0-3.3.7-5.7 3.7-5.7 7.1v29.8c-13.5 4.8-26 12-36.9 21.3l-25.8-14.9c-2.9-1.7-6.7-1.1-9 1.4-15 16.2-26.5 35.8-33.2 57.4-1 3.300.4 6.800 3.3 8.500l25.8 14.9c-2.6 14.1-2.6 28.5 0 42.6l-25.8 14.9c-3 1.7-4.3 5.2-3.3 8.5 6.7 21.6 18.2 41.1 33.2 57.4 2.3 2.5 6 3.1 9 1.4l25.8-14.9c10.9 9.3 23.4 16.5 36.9 21.3v29.8c0 3.4 2.4 6.4 5.7 7.1 22.3 5 45 4.8 66.2 0 3.3-.7 5.7-3.7 5.7-7.1v-29.8c13.5-4.8 26-12 36.9-21.3l25.800 14.9c2.9 1.7 6.7 1.1 9-1.4 15-16.2 26.5-35.8 33.2-57.4 1-3.3-.4-6.8-3.3-8.5l-25.8-14.9zM496 368.5c-26.8 0-48.5-21.8-48.5-48.5s21.8-48.5 48.5-48.5 48.5 21.8 48.5 48.5-21.7 48.500-48.500 48.500zM96 224c35.3 0 64-28.7 64-64s-28.7-64-64-64-64 28.7-64 64 28.7 64 64 64zm224 32c1.9 0 3.7-.5 5.6-.6 8.3-21.7 20.5-42.1 36.3-59.2 7.4-8 17.9-12.6 28.9-12.6 6.9 0 13.7 1.8 19.6 5.3l7.9 4.6c.8-.5 1.6-.9 2.400-1.400 7-14.600 11.200-30.800 11.200-48 0-61.9-50.100-112-112-112S208 82.100 208 144c0 61.900 50.100 112 112 112zm105.200 194.500c-2.300-1.200-4.600-2.600-6.800-3.900-8.200 4.800-15.300 9.800-27.500 9.800-10.900 0-21.400-4.600-28.900-12.600-18.300-19.800-32.300-43.900-40.200-69.600-10.700-34.500 24.900-49.700 25.800-50.300-.1-2.600-.1-5.200 0-7.800l-7.900-4.600c-3.800-2.200-7-5-9.800-8.100-3.300.2-6.500.6-9.800.6-24.600 0-47.600-6-68.500-16h-8.300C179.600 288 128 339.600 128 403.200V432c0 26.500 21.500 48 48 48h255.400c-3.700-6-6.200-12.800-6.200-20.300v-9.200zM173.100 274.600C161.500 263.100 145.600 256 128 256H64c-35.300 0-64 28.700-64 64v32c0 17.700 14.300 32 32 32h65.900c6.300-47.400 34.900-87.300 75.200-109.400z"/></svg><span class="t " style="top:674.51px;font-size:19.60px;line-height:25px;color:#c2c7d0;letter-spacing:0.126px;left:73.00px;">Utilizadores</span><svg class="ic" style="left:272.88px;top:673.75px;width:10.25px;height:20.5px;" viewBox="0 0 256 512"><path fill="#c2c7d0" d="M31.7 239l136-136c9.4-9.4 24.6-9.4 33.9 0l22.6 22.6c9.4 9.4 9.4 24.6 0 33.9L127.9 256l96.4 96.4c9.4 9.4 9.4 24.6 0 33.9L201.7 409c-9.4 9.4-24.6 9.4-33.9 0l-136-136c-9.5-9.4-9.5-24.6-.1-34z"/></svg></li><li><svg class="ic" style="left:33.01px;top:729.15px;width:28.38px;height:22.7px;" viewBox="0 0 640 512"><path fill="#c2c7d0" d="M512.1 191l-8.2 14.3c-3 5.3-9.4 7.5-15.1 5.4-11.8-4.4-22.6-10.7-32.1-18.6-4.6-3.8-5.8-10.5-2.8-15.7l8.2-14.3c-6.9-8-12.3-17.3-15.9-27.4h-16.5c-6 0-11.2-4.3-12.2-10.3-2-12-2.1-24.6 0-37.1 1-6 6.2-10.4 12.2-10.4h16.5c3.6-10.1 9-19.4 15.9-27.4l-8.2-14.3c-3-5.2-1.9-11.9 2.8-15.7 9.5-7.9 20.4-14.2 32.1-18.6 5.7-2.1 12.1.1 15.1 5.4l8.2 14.3c10.5-1.9 21.2-1.9 31.7 0L552 6.3c3-5.3 9.4-7.5 15.1-5.4 11.8 4.4 22.6 10.7 32.1 18.6 4.6 3.8 5.8 10.5 2.8 15.7l-8.2 14.3c6.9 8 12.3 17.3 15.9 27.4h16.5c6 0 11.2 4.3 12.2 10.3 2 12 2.1 24.6 0 37.1-1 6-6.2 10.4-12.2 10.4h-16.5c-3.6 10.1-9 19.4-15.9 27.4l8.2 14.3c3 5.2 1.9 11.9-2.8 15.7-9.5 7.9-20.4 14.2-32.1 18.6-5.7 2.1-12.1-.1-15.1-5.4l-8.2-14.3c-10.4 1.9-21.2 1.9-31.7 0zm-10.5-58.8c38.5 50 95.6-7 45.500-45.500-38.500-50.100-95.600 7-45.500 45.500zM386.300 286.100l33.700 16.800c10.100 5.800 14.500 18.100 10.500 29.100-8.900 24.200-26.400 46.400-42.600 65.800-7.400 8.900-20.200 11.100-30.300 5.300l-29.100-16.800c-16 13.700-34.600 24.600-54.900 31.700v33.600c0 11.600-8.300 21.600-19.700 23.600-24.600 4.200-50.400 4.400-75.900 0-11.500-2-20-11.900-20-23.600V418c-20.300-7.200-38.900-18-54.900-31.700L74 403c-10 5.800-22.900 3.600-30.300-5.300-16.200-19.400-33.300-41.600-42.200-65.700-4-10.900.4-23.200 10.500-29.100l33.300-16.800c-3.900-20.900-3.900-42.400 0-63.400L12 205.800c-10.100-5.800-14.600-18.100-10.500-29 8.900-24.200 26-46.400 42.200-65.800 7.400-8.900 20.200-11.100 30.300-5.300l29.100 16.800c16-13.700 34.600-24.600 54.900-31.700V57.100c0-11.500 8.200-21.500 19.600-23.500 24.600-4.200 50.500-4.400 76-.1 11.500 2 20 11.900 20 23.600v33.600c20.300 7.200 38.900 18 54.900 31.700l29.100-16.800c10-5.800 22.900-3.600 30.300 5.300 16.200 19.400 33.200 41.600 42.100 65.800 4 10.900.1 23.200-10 29.100l-33.700 16.800c3.900 21 3.900 42.500 0 63.500zm-117.600 21.100c59.200-77-28.700-164.900-105.700-105.700-59.200 77 28.700 164.900 105.700 105.700zm243.400 182.700l-8.200 14.300c-3 5.300-9.400 7.500-15.100 5.400-11.800-4.400-22.600-10.700-32.100-18.600-4.600-3.800-5.800-10.500-2.800-15.700l8.200-14.300c-6.900-8-12.300-17.300-15.900-27.400h-16.500c-6 0-11.200-4.300-12.200-10.300-2-12-2.100-24.600 0-37.100 1-6 6.2-10.400 12.200-10.400h16.500c3.600-10.100 9-19.400 15.900-27.400l-8.200-14.300c-3-5.200-1.900-11.900 2.800-15.700 9.500-7.900 20.400-14.200 32.100-18.600 5.700-2.100 12.100.1 15.100 5.400l8.200 14.300c10.500-1.900 21.200-1.900 31.700 0l8.200-14.300c3-5.300 9.400-7.500 15.100-5.400 11.800 4.400 22.600 10.700 32.100 18.600 4.600 3.800 5.800 10.500 2.800 15.700l-8.200 14.300c6.900 8 12.300 17.300 15.900 27.400h16.500c6 0 11.200 4.300 12.200 10.300 2 12 2.100 24.600 0 37.100-1 6-6.200 10.400-12.200 10.400h-16.500c-3.600 10.100-9 19.400-15.900 27.400l8.200 14.300c3 5.200 1.900 11.900-2.800 15.700-9.500 7.900-20.400 14.200-32.100 18.600-5.700 2.100-12.100-.1-15.100-5.400l-8.200-14.300c-10.400 1.900-21.200 1.900-31.700 0zM501.600 431c38.500 50 95.600-7 45.500-45.500-38.500-50.100-95.600 7-45.500 45.500z"/></svg><span class="t " style="top:728.51px;font-size:19.60px;line-height:25px;color:#c2c7d0;letter-spacing:0.018px;left:73.00px;">Configurações</span></li></ul></aside>
</body>
</html>
